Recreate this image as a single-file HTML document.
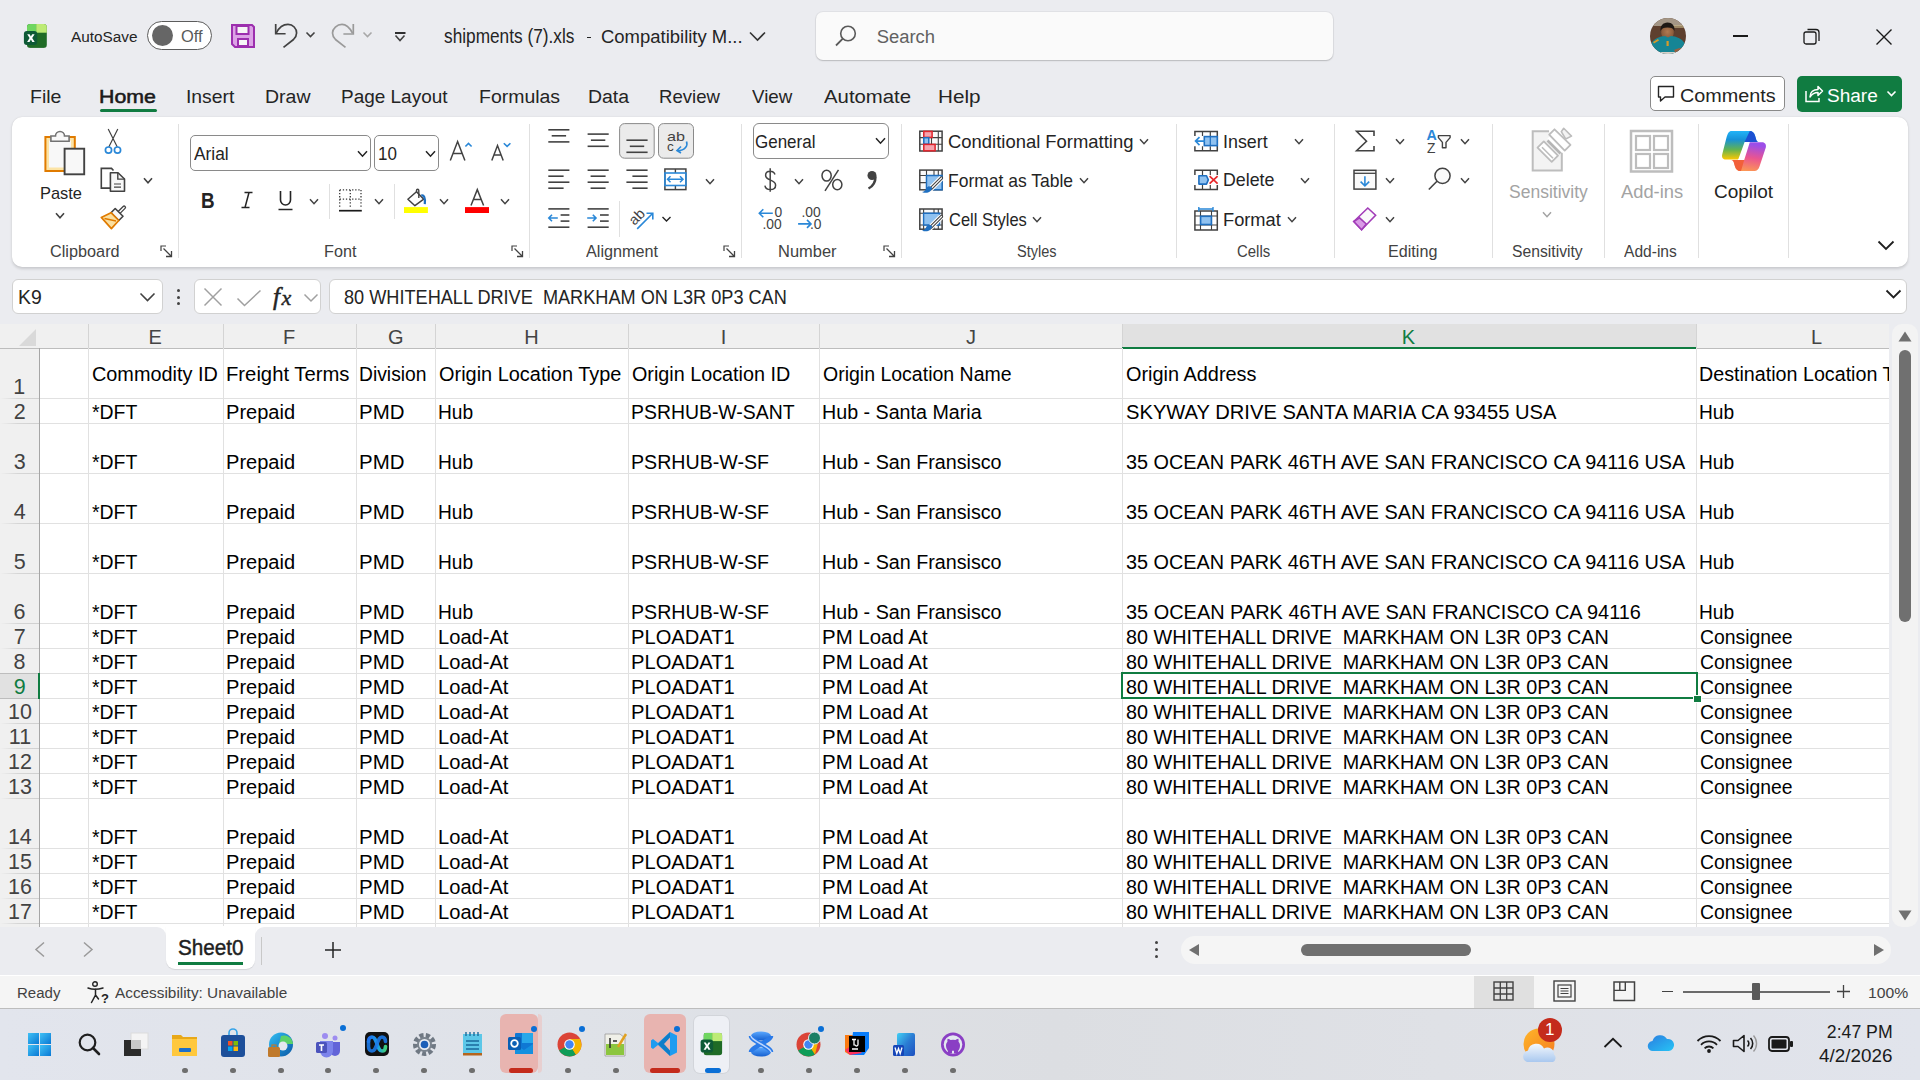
<!DOCTYPE html><html><head><meta charset="utf-8"><style>
html,body{margin:0;padding:0;}
body{width:1920px;height:1080px;position:relative;overflow:hidden;font-family:"Liberation Sans",sans-serif;background:#e9ecf2}
body>*{position:absolute;}
.t{position:absolute;white-space:pre;transform-origin:0 0;}
svg{position:absolute;overflow:visible}
</style></head><body>
<div style="left:0px;top:0px;width:1920px;height:1080px;background:#ebecf0"></div>
<svg style="left:0;top:0" width="1920" height="1080" viewBox="0 0 1920 1080"><defs><clipPath id="xlc"><rect x="27" y="23.9" width="19.8" height="24" rx="3.2"/></clipPath></defs>
<g clip-path="url(#xlc)"><rect x="27" y="23.9" width="20" height="24" fill="#1f6b26"/><rect x="27" y="23.9" width="9.2" height="8.8" fill="#6fd660"/><rect x="36.2" y="23.9" width="10.8" height="8.8" fill="#bdeb75"/></g>
<rect x="23.9" y="31" width="13.3" height="14" rx="3" fill="#0e5a36"/>
<path d="M27.2 34.2h2.4l1.3 2.4 1.3-2.4h2.4l-2.4 3.9 2.5 3.9h-2.4l-1.4-2.5-1.4 2.5h-2.4l2.5-3.9z" fill="#fff"/></svg>
<span class="t" style="left:71.30px;top:29.00px;font-size:15.51px;line-height:15.51px;color:#242424;transform:scaleX(0.9891);">AutoSave</span>
<div style="left:147px;top:21px;width:65px;height:29px;border:1.5px solid #5c5c5c;border-radius:15px;box-sizing:border-box;background:#fff"></div>
<div style="left:152px;top:25px;width:21px;height:21px;background:#666;border-radius:50%"></div>
<span class="t" style="left:180.96px;top:29.00px;font-size:15.80px;line-height:15.80px;color:#5a5a5a;transform:scaleX(1.0426);">Off</span>
<svg style="left:231px;top:24px;" width="24" height="24" viewBox="0 0 24 24"><path d="M1 1h20l2 2v20H4l-3-3z" fill="#dca3e6" stroke="#9c2fae" stroke-width="2"/>
<rect x="5.5" y="2" width="12" height="8" fill="#f6f6f6" stroke="#9c2fae" stroke-width="2"/>
<rect x="7" y="15" width="10" height="7" fill="#f6f6f6" stroke="#9c2fae" stroke-width="2"/></svg>
<svg style="left:0;top:0" width="1920" height="1080" viewBox="0 0 1920 1080"><path d="M275.7 24V33.75H285.6" fill="none" stroke="#424242" stroke-width="1.7"/><path d="M276.3 33C279 27.5 283 24.4 288 24.4C293 24.4 296.6 28.5 296.6 33C296.6 36 295 38 293.5 39.5L283.5 47.3" fill="none" stroke="#424242" stroke-width="1.7"/><path d="M353.3 24V34H343.4" fill="none" stroke="#9a9a9a" stroke-width="1.7"/><path d="M352.5 33C349.5 27.5 346 24.4 342 24.4C337 24.4 332.5 28.5 332.5 33C332.5 36 334 38 335.5 39.5L345.5 47.3" fill="none" stroke="#9a9a9a" stroke-width="1.7"/></svg>
<svg style="left:305px;top:31px;" width="12" height="8" viewBox="0 0 12 8"><path d="M1.5 1.5l4 4 4-4" fill="none" stroke="#424242" stroke-width="1.6"/></svg>
<svg style="left:362px;top:31px;" width="12" height="8" viewBox="0 0 12 8"><path d="M1.5 1.5l4 4 4-4" fill="none" stroke="#a8a8a8" stroke-width="1.6"/></svg>
<svg style="left:393px;top:30px;" width="14" height="13" viewBox="0 0 14 13"><path d="M2 3h10.5" stroke="#1a1a1a" stroke-width="1.8"/><path d="M2.5 5.5l4.5 5 4.5-5" fill="none" stroke="#424242" stroke-width="1.6"/></svg>
<span class="t" style="left:444.08px;top:27.00px;font-size:19.42px;line-height:19.42px;color:#242424;transform:scaleX(0.8890);">shipments (7).xls</span>
<div style="left:586.5px;top:37px;width:4.5px;height:1.4px;background:#242424"></div>
<span class="t" style="left:601.38px;top:28.00px;font-size:18.12px;line-height:18.12px;color:#242424;transform:scaleX(1.0196);">Compatibility M...</span>
<svg style="left:749px;top:31px;" width="17" height="11" viewBox="0 0 17 11"><path d="M1 1.5l7.5 7.5 7.5-7.5" fill="none" stroke="#333" stroke-width="1.6"/></svg>
<div style="left:816px;top:12px;width:517px;height:48px;background:#fafafa;border-radius:7px;box-shadow:0 1px 1.5px rgba(0,0,0,0.18), 0 0 0 1px rgba(0,0,0,0.04)"></div>
<svg style="left:834px;top:24px;" width="24" height="24" viewBox="0 0 24 24"><circle cx="14" cy="9.5" r="7.3" fill="none" stroke="#5a5a5a" stroke-width="1.6"/><path d="M8.8 14.7L2 21.5" stroke="#5a5a5a" stroke-width="1.8"/></svg>
<span class="t" style="left:876.67px;top:28.00px;font-size:18.41px;line-height:18.41px;color:#616161;">Search</span>
<svg style="left:1650px;top:17.7px;" width="36" height="36" viewBox="0 0 36 36"><defs><clipPath id="avc"><circle cx="18" cy="18" r="18"/></clipPath><radialGradient id="avf" cx="0.5" cy="0.45" r="0.5"><stop offset="0" stop-color="#b07a52"/><stop offset="1" stop-color="#8a5a3a"/></radialGradient></defs>
<g clip-path="url(#avc)"><rect x="0" y="0" width="36" height="36" fill="#5e3f2e"/><rect x="0" y="0" width="36" height="8" fill="#a49686"/>
<path d="M22 7h14v3H22z" fill="#c8b88a" opacity="0.6"/>
<ellipse cx="17.5" cy="14.5" rx="6.3" ry="7.5" fill="url(#avf)"/>
<path d="M10.5 13c-0.5-5 2.5-8.5 7-8.5s7.5 3 7 8.5c-1-2.5-3-3.5-7-3.5s-6 1-7 3.5z" fill="#1e1814"/>
<path d="M1 26c3-6 9-7.5 14-8l3 1.5 3-1.5c5 0.5 11 2 14 8v12H1z" fill="#168595"/>
<path d="M3 24l5-3 1 1.5-5 3z" fill="#d69a2a"/><rect x="16.5" y="23" width="2.2" height="5" fill="#d69a2a"/>
<path d="M24 32c4-1.5 8-2.5 12-2v6H26z" fill="#9a6040"/><rect x="10" y="34" width="16" height="3" fill="#d8d0c8"/></g></svg>
<div style="left:1733px;top:35px;width:15px;height:1.5px;background:#1a1a1a"></div>
<svg style="left:1803px;top:28px;" width="18" height="17" viewBox="0 0 18 17"><rect x="1" y="4" width="12" height="12" rx="2" fill="none" stroke="#1a1a1a" stroke-width="1.3"/><path d="M4.5 1.5h8.5a3 3 0 0 1 3 3v8.5" fill="none" stroke="#1a1a1a" stroke-width="1.3"/></svg>
<svg style="left:1875px;top:28px;" width="18" height="18" viewBox="0 0 18 18"><path d="M1.5 1.5l15 15M16.5 1.5l-15 15" stroke="#1a1a1a" stroke-width="1.4"/></svg>
<span class="t" style="left:30.19px;top:87.00px;font-size:19.13px;line-height:19.13px;color:#242424;transform:scaleX(1.0208);">File</span>
<span class="t" style="left:99.04px;top:87.00px;font-size:19.13px;line-height:19.13px;color:#1a1a1a;-webkit-text-stroke:0.55px #1a1a1a;transform:scaleX(1.1165);">Home</span>
<span class="t" style="left:185.76px;top:87.00px;font-size:19.13px;line-height:19.13px;color:#242424;transform:scaleX(1.0107);">Insert</span>
<span class="t" style="left:265.19px;top:87.00px;font-size:19.13px;line-height:19.13px;color:#242424;transform:scaleX(1.0200);">Draw</span>
<span class="t" style="left:340.98px;top:87.00px;font-size:19.13px;line-height:19.13px;color:#242424;transform:scaleX(0.9925);">Page Layout</span>
<span class="t" style="left:479.44px;top:87.00px;font-size:19.13px;line-height:19.13px;color:#242424;transform:scaleX(1.0184);">Formulas</span>
<span class="t" style="left:588.44px;top:87.00px;font-size:19.13px;line-height:19.13px;color:#242424;transform:scaleX(1.0171);">Data</span>
<span class="t" style="left:659.01px;top:87.00px;font-size:19.13px;line-height:19.13px;color:#242424;transform:scaleX(0.9719);">Review</span>
<span class="t" style="left:751.66px;top:87.00px;font-size:19.13px;line-height:19.13px;color:#242424;transform:scaleX(0.9809);">View</span>
<span class="t" style="left:823.75px;top:87.00px;font-size:19.13px;line-height:19.13px;color:#242424;transform:scaleX(1.0646);">Automate</span>
<span class="t" style="left:938.35px;top:87.00px;font-size:19.13px;line-height:19.13px;color:#242424;transform:scaleX(1.0806);">Help</span>
<div style="left:100px;top:108.5px;width:57px;height:3px;background:#107c41;border-radius:2px"></div>
<div style="left:1650px;top:76px;width:135px;height:35px;border:1px solid #8a8a8a;border-radius:5px;box-sizing:border-box;background:#fff"></div>
<svg style="left:1657px;top:85px;" width="18" height="18" viewBox="0 0 18 18"><path d="M1.5 1.5h15v10.5H8l-4.5 4V12H1.5z" fill="none" stroke="#242424" stroke-width="1.4" stroke-linejoin="round"/></svg>
<span class="t" style="left:1680.01px;top:87.00px;font-size:18.41px;line-height:18.41px;color:#242424;transform:scaleX(1.0752);">Comments</span>
<div style="left:1797px;top:76px;width:105px;height:36px;background:#107c41;border-radius:5px"></div>
<svg style="left:1803px;top:85px;" width="20" height="18" viewBox="0 0 20 18"><path d="M3 6v10.5h13V13" fill="none" stroke="#fff" stroke-width="1.5"/><path d="M7 12c0-5 3.5-7.5 8-7.5V1.5l4.5 4.5-4.5 4.5V7.5c-4 0-6 1.5-8 4.5z" fill="none" stroke="#fff" stroke-width="1.5" stroke-linejoin="round"/></svg>
<span class="t" style="left:1827.14px;top:87.00px;font-size:18.41px;line-height:18.41px;color:#ffffff;transform:scaleX(1.0339);">Share</span>
<svg style="left:1886px;top:90px;" width="12" height="8" viewBox="0 0 12 8"><path d="M1.5 1.5l4 4 4-4" fill="none" stroke="#fff" stroke-width="1.6"/></svg>
<div style="left:12px;top:117px;width:1896px;height:150px;background:#fff;border-radius:10px;box-shadow:0 1.5px 3px rgba(0,0,0,0.14),0 0 1px rgba(0,0,0,0.10)"></div>
<div style="left:178px;top:124px;width:1px;height:134px;background:#e0e0e0"></div>
<div style="left:529px;top:124px;width:1px;height:134px;background:#e0e0e0"></div>
<div style="left:741px;top:124px;width:1px;height:134px;background:#e0e0e0"></div>
<div style="left:901px;top:124px;width:1px;height:134px;background:#e0e0e0"></div>
<div style="left:1176px;top:124px;width:1px;height:134px;background:#e0e0e0"></div>
<div style="left:1334px;top:124px;width:1px;height:134px;background:#e0e0e0"></div>
<div style="left:1492px;top:124px;width:1px;height:134px;background:#e0e0e0"></div>
<div style="left:1604px;top:124px;width:1px;height:134px;background:#e0e0e0"></div>
<div style="left:1698px;top:124px;width:1px;height:134px;background:#e0e0e0"></div>
<div style="left:1788px;top:124px;width:1px;height:134px;background:#e0e0e0"></div>
<span class="t" style="left:50.19px;top:244.00px;font-size:16.67px;line-height:16.67px;color:#424242;transform:scaleX(0.9760);">Clipboard</span>
<span class="t" style="left:323.70px;top:244.00px;font-size:16.67px;line-height:16.67px;color:#424242;transform:scaleX(0.9713);">Font</span>
<span class="t" style="left:586.00px;top:244.00px;font-size:16.67px;line-height:16.67px;color:#424242;transform:scaleX(0.9730);">Alignment</span>
<span class="t" style="left:777.68px;top:244.00px;font-size:16.67px;line-height:16.67px;color:#424242;transform:scaleX(0.9884);">Number</span>
<span class="t" style="left:1016.84px;top:244.00px;font-size:16.67px;line-height:16.67px;color:#424242;transform:scaleX(0.8733);">Styles</span>
<span class="t" style="left:1237.25px;top:244.00px;font-size:16.67px;line-height:16.67px;color:#424242;transform:scaleX(0.8972);">Cells</span>
<span class="t" style="left:1387.71px;top:244.00px;font-size:16.67px;line-height:16.67px;color:#424242;transform:scaleX(0.9691);">Editing</span>
<span class="t" style="left:1511.79px;top:244.00px;font-size:16.67px;line-height:16.67px;color:#424242;transform:scaleX(0.9428);">Sensitivity</span>
<span class="t" style="left:1623.75px;top:244.00px;font-size:16.67px;line-height:16.67px;color:#424242;transform:scaleX(0.9344);">Add-ins</span>
<svg style="left:160px;top:245px;" width="13" height="13" viewBox="0 0 13 13"><path d="M1 6V1h5" fill="none" stroke="#424242" stroke-width="1.2"/><path d="M3.5 3.5L11.5 11.5M11.5 6v5.5H6" fill="none" stroke="#424242" stroke-width="1.3"/></svg>
<svg style="left:511px;top:245px;" width="13" height="13" viewBox="0 0 13 13"><path d="M1 6V1h5" fill="none" stroke="#424242" stroke-width="1.2"/><path d="M3.5 3.5L11.5 11.5M11.5 6v5.5H6" fill="none" stroke="#424242" stroke-width="1.3"/></svg>
<svg style="left:723px;top:245px;" width="13" height="13" viewBox="0 0 13 13"><path d="M1 6V1h5" fill="none" stroke="#424242" stroke-width="1.2"/><path d="M3.5 3.5L11.5 11.5M11.5 6v5.5H6" fill="none" stroke="#424242" stroke-width="1.3"/></svg>
<svg style="left:883px;top:245px;" width="13" height="13" viewBox="0 0 13 13"><path d="M1 6V1h5" fill="none" stroke="#424242" stroke-width="1.2"/><path d="M3.5 3.5L11.5 11.5M11.5 6v5.5H6" fill="none" stroke="#424242" stroke-width="1.3"/></svg>
<svg style="left:1877px;top:240px;" width="18" height="11" viewBox="0 0 18 11"><path d="M1.5 1.5l7.5 7.5 7.5-7.5" fill="none" stroke="#1f1f1f" stroke-width="1.8"/></svg>
<svg style="left:0;top:0" width="1920" height="1080" viewBox="0 0 1920 1080"><rect x="45.4" y="137" width="29.4" height="34" fill="#fce4a6" stroke="#e07b00" stroke-width="2"/><rect x="49" y="140.5" width="22" height="27" fill="#f8f8f8"/><path d="M50.9 141.3V136h4.6a4.5 4.5 0 0 1 9 0h4.6v5.3z" fill="#f8f8f8" stroke="#727272" stroke-width="1.6"/><rect x="64.6" y="148.7" width="19.6" height="25.6" fill="#f8f8f8" stroke="#424242" stroke-width="1.9"/><path d="M108.2 129L117.3 147M117.8 129L108.8 147" stroke="#424242" stroke-width="1.2"/><circle cx="108.5" cy="150.1" r="3.1" fill="none" stroke="#2a88d8" stroke-width="1.7"/><circle cx="117.5" cy="150.1" r="3.1" fill="none" stroke="#2a88d8" stroke-width="1.7"/><path d="M110 188.1H101.3V168.4H111.5L113.5 170.5" fill="none" stroke="#424242" stroke-width="1.6"/><path d="M110.4 172.7H118L124.5 179V191.3H110.4z" fill="#f8f8f8" stroke="#424242" stroke-width="1.6" stroke-linejoin="round"/><path d="M117.8 172.7V179.1H124.5" fill="none" stroke="#424242" stroke-width="1.4"/><path d="M114 184H121M114 187.2H121" stroke="#424242" stroke-width="1.2"/><path d="M119.1 212.4L124.1 207.4" stroke="#424242" stroke-width="4" stroke-linecap="round"/><path d="M119.1 212.4L124.1 207.4" stroke="#fff" stroke-width="1.4" stroke-linecap="round"/><path d="M111.0 212.7L115.2 208.5 123.0 216.3 118.8 220.5z" fill="#f8f8f8" stroke="#424242" stroke-width="1.6" stroke-linejoin="round"/><path d="M111.0 212.7L118.8 220.5 111.4 228.6 101.3 217.4z" fill="#fbe0a0" stroke="#e07b00" stroke-width="1.7" stroke-linejoin="round"/><path d="M104.5 218.5L116 221" stroke="#e07b00" stroke-width="1.3"/></svg>
<span class="t" style="left:39.89px;top:185.00px;font-size:17.39px;line-height:17.39px;color:#242424;transform:scaleX(0.9441);">Paste</span>
<svg style="left:55px;top:212px;" width="10" height="7.5" viewBox="0 0 10 7.5"><path d="M1 1.2l4.0 4.5l4.0 -4.5" fill="none" stroke="#424242" stroke-width="1.6"/></svg>
<svg style="left:143px;top:177px;" width="10" height="7.5" viewBox="0 0 10 7.5"><path d="M1 1.2l4.0 4.5l4.0 -4.5" fill="none" stroke="#424242" stroke-width="1.6"/></svg>
<div style="left:190px;top:135px;width:181px;height:36px;border:1px solid #8a8a8a;border-radius:5px;box-sizing:border-box;background:#fff"></div>
<span class="t" style="left:194.00px;top:145.00px;font-size:18.12px;line-height:18.12px;color:#242424;transform:scaleX(0.9557);">Arial</span>
<svg style="left:357px;top:150px;" width="11" height="8" viewBox="0 0 11 8"><path d="M1 1.2l4.5 5l4.5 -5" fill="none" stroke="#242424" stroke-width="1.5"/></svg>
<div style="left:374px;top:135px;width:65px;height:36px;border:1px solid #8a8a8a;border-radius:5px;box-sizing:border-box;background:#fff"></div>
<span class="t" style="left:377.73px;top:145.00px;font-size:18.70px;line-height:18.70px;color:#242424;transform:scaleX(0.9093);">10</span>
<svg style="left:425px;top:150px;" width="11" height="8" viewBox="0 0 11 8"><path d="M1 1.2l4.5 5l4.5 -5" fill="none" stroke="#242424" stroke-width="1.5"/></svg>
<svg style="left:0;top:0" width="1920" height="1080" viewBox="0 0 1920 1080"><path d="M450.3 160.4L457.6 141.6 464.9 160.4M453 153.6h9.2" fill="none" stroke="#424242" stroke-width="1.5"/><path d="M465.4 146.5l3.1-3.1 3.1 3.1" fill="none" stroke="#2a88d8" stroke-width="1.6"/><path d="M491.8 160.4L497.5 145.6 503.2 160.4M493.9 155h7.2" fill="none" stroke="#424242" stroke-width="1.5"/><path d="M503.8 143.2l3.3 3.2 3.3-3.2" fill="none" stroke="#2a88d8" stroke-width="1.6"/><path d="M339.7 189.9H361M339.7 199.2H361M339.7 189.9V208.6M350.3 189.9V208.6M361 189.9V208.6" fill="none" stroke="#3a3a3a" stroke-width="1.3" stroke-dasharray="1.3 1.8"/><path d="M339 210.7h22.8" stroke="#1a1a1a" stroke-width="1.7"/><path d="M407.9 199.2L416.5 191.7 423.75 199.2 414.9 205.7z" fill="#fff" stroke="#424242" stroke-width="1.5" stroke-linejoin="round"/><path d="M416.5 191.9v-1.5c0-1.6 2.3-1.6 2.3 0v7.5" fill="none" stroke="#424242" stroke-width="1.4"/><path d="M421.3 195.6c2.5-0.8 4.2 1.6 3.5 8.5" fill="none" stroke="#1f6fc0" stroke-width="2.2"/><rect x="404" y="207.1" width="23.9" height="5.9" fill="#ffff00"/><path d="M471 205.5L477.3 189.6 483.6 205.5M473.6 199.5h7.4" fill="none" stroke="#424242" stroke-width="1.5"/><rect x="465" y="207.1" width="24" height="5.9" fill="#ff0000"/></svg>
<span class="t" style="left:201.27px;top:191.00px;font-size:21.30px;line-height:21.30px;color:#242424;font-weight:bold;transform:scaleX(0.8849);">B</span>
<svg style="left:239px;top:191px;" width="16" height="18" viewBox="0 0 16 18"><path d="M5.5 1.5h8M2.5 16.5h8M10 1.5L6 16.5" fill="none" stroke="#242424" stroke-width="1.5"/></svg>
<svg style="left:277px;top:190px;" width="17" height="21" viewBox="0 0 17 21"><path d="M3.5 1v9a5 5 0 0 0 10 0V1" fill="none" stroke="#242424" stroke-width="1.6"/><path d="M1.5 19.5h14" stroke="#242424" stroke-width="1.5"/></svg>
<svg style="left:309px;top:198px;" width="10" height="7.5" viewBox="0 0 10 7.5"><path d="M1 1.2l4.0 4.5l4.0 -4.5" fill="none" stroke="#424242" stroke-width="1.5"/></svg>
<div style="left:329px;top:184px;width:1px;height:35px;background:#e0e0e0"></div>
<svg style="left:374px;top:198px;" width="10" height="7.5" viewBox="0 0 10 7.5"><path d="M1 1.2l4.0 4.5l4.0 -4.5" fill="none" stroke="#424242" stroke-width="1.5"/></svg>
<div style="left:394px;top:184px;width:1px;height:35px;background:#e0e0e0"></div>
<svg style="left:439px;top:198px;" width="10" height="7.5" viewBox="0 0 10 7.5"><path d="M1 1.2l4.0 4.5l4.0 -4.5" fill="none" stroke="#424242" stroke-width="1.5"/></svg>
<svg style="left:500px;top:198px;" width="10" height="7.5" viewBox="0 0 10 7.5"><path d="M1 1.2l4.0 4.5l4.0 -4.5" fill="none" stroke="#424242" stroke-width="1.5"/></svg>
<svg style="left:0;top:0" width="1920" height="1080" viewBox="0 0 1920 1080"><path d="M548.3 129.8H569.4" stroke="#424242" stroke-width="1.6"/><path d="M551.7 135.8H566.1" stroke="#424242" stroke-width="1.6"/><path d="M548.3 141.9H569.4" stroke="#424242" stroke-width="1.6"/><path d="M587.6 134.1H608.7" stroke="#424242" stroke-width="1.6"/><path d="M590.9 140.2H605.3" stroke="#424242" stroke-width="1.6"/><path d="M587.6 146.3H608.7" stroke="#424242" stroke-width="1.6"/><rect x="619.6" y="123.6" width="34.6" height="34.6" rx="5" fill="#ebebeb" stroke="#8a8a8a" stroke-width="1"/><path d="M626.4 140.2H647.6" stroke="#424242" stroke-width="1.6"/><path d="M629.8 146.3H644.2" stroke="#424242" stroke-width="1.6"/><path d="M626.4 152.3H647.6" stroke="#424242" stroke-width="1.6"/><rect x="658.5" y="123.6" width="35" height="34.6" rx="5" fill="#ebebeb" stroke="#8a8a8a" stroke-width="1"/><text x="667" y="140.6" font-family="Liberation Sans" font-size="13.5" fill="#424242" textLength="18" lengthAdjust="spacingAndGlyphs">ab</text><text x="667" y="151.2" font-family="Liberation Sans" font-size="13.5" fill="#424242">c</text><path d="M686.5 141.5c1.5 4-1 9-9 9.5M681 146.5l-4 4 4 2.5" fill="none" stroke="#2a88d8" stroke-width="1.6"/><path d="M548.3 170.2H569.4" stroke="#424242" stroke-width="1.6"/><path d="M548.3 176.2H563.6" stroke="#424242" stroke-width="1.6"/><path d="M548.3 182.2H569.4" stroke="#424242" stroke-width="1.6"/><path d="M548.3 188.2H563.6" stroke="#424242" stroke-width="1.6"/><path d="M587.6 170.2H608.7" stroke="#424242" stroke-width="1.6"/><path d="M590.6 176.2H605.6" stroke="#424242" stroke-width="1.6"/><path d="M587.6 182.2H608.7" stroke="#424242" stroke-width="1.6"/><path d="M590.6 188.2H605.6" stroke="#424242" stroke-width="1.6"/><path d="M626.4 170.2H647.6" stroke="#424242" stroke-width="1.6"/><path d="M632.4 176.2H647.6" stroke="#424242" stroke-width="1.6"/><path d="M626.4 182.2H647.6" stroke="#424242" stroke-width="1.6"/><path d="M632.4 188.2H647.6" stroke="#424242" stroke-width="1.6"/><rect x="664.9" y="169" width="21" height="20.6" fill="none" stroke="#424242" stroke-width="1.5"/><path d="M675.4 169v4M675.4 185.5v4" stroke="#424242" stroke-width="1.4"/><rect x="664.9" y="173" width="21" height="12.5" fill="none" stroke="#2a88d8" stroke-width="1.6"/><path d="M667.5 179.3h15.5M670.5 176.3l-3 3 3 3M680 176.3l3 3-3 3" fill="none" stroke="#2a88d8" stroke-width="1.5"/><path d="M548.3 208.9H569.4" stroke="#424242" stroke-width="1.6"/><path d="M560.6 215H569.4" stroke="#424242" stroke-width="1.6"/><path d="M560.6 221.1H569.4" stroke="#424242" stroke-width="1.6"/><path d="M548.3 227.2H569.4" stroke="#424242" stroke-width="1.6"/><path d="M557.8 218h-9M552 214.8l-3.2 3.2 3.2 3.2" fill="none" stroke="#2a88d8" stroke-width="1.6"/><path d="M587.6 208.9H608.7" stroke="#424242" stroke-width="1.6"/><path d="M600 215H608.7" stroke="#424242" stroke-width="1.6"/><path d="M600 221.1H608.7" stroke="#424242" stroke-width="1.6"/><path d="M587.6 227.2H608.7" stroke="#424242" stroke-width="1.6"/><path d="M587.2 218h9M592.8 214.8l3.2 3.2-3.2 3.2" fill="none" stroke="#2a88d8" stroke-width="1.6"/><text x="0" y="0" font-family="Liberation Sans" font-size="14.5" fill="#424242" transform="translate(634.5,226) rotate(-45)">ab</text><path d="M637.2 228.9L652.8 213.3M646.5 213.3h6.3v6.3" fill="none" stroke="#2a88d8" stroke-width="1.6"/><path d="M662.5 217l4 4 4-4" fill="none" stroke="#242424" stroke-width="1.4"/></svg>
<div style="left:619px;top:201px;width:1px;height:36px;background:#e0e0e0"></div>
<svg style="left:705px;top:178px;" width="10" height="7.5" viewBox="0 0 10 7.5"><path d="M1 1.2l4.0 4.5l4.0 -4.5" fill="none" stroke="#424242" stroke-width="1.5"/></svg>
<div style="left:753px;top:123px;width:136px;height:36px;border:1px solid #8a8a8a;border-radius:6px;box-sizing:border-box;background:#fff"></div>
<span class="t" style="left:755.15px;top:132.00px;font-size:19.13px;line-height:19.13px;color:#242424;transform:scaleX(0.8889);">General</span>
<svg style="left:875px;top:137px;" width="11" height="8" viewBox="0 0 11 8"><path d="M1 1.2l4.5 5l4.5 -5" fill="none" stroke="#242424" stroke-width="1.5"/></svg>
<svg style="left:0;top:0" width="1920" height="1080" viewBox="0 0 1920 1080"><path d="M775 174.5C774.3 172.3 772.5 171.2 770.2 171.2C767.4 171.2 765.6 172.8 765.6 175.2C765.6 178.2 768.2 179.2 770.6 180.1C773.2 181.1 775.6 182.3 775.6 185.2C775.6 187.9 773.4 189.6 770.3 189.6C767.5 189.6 765.4 188.2 764.9 185.6M770.2 168.3V191.7" fill="none" stroke="#424242" stroke-width="1.5"/><ellipse cx="826.6" cy="175.6" rx="4.6" ry="5.4" fill="none" stroke="#424242" stroke-width="1.5"/><ellipse cx="837.3" cy="184.6" rx="4.6" ry="5.2" fill="none" stroke="#424242" stroke-width="1.5"/><path d="M838.5 169.8L825 190.8" stroke="#424242" stroke-width="1.5"/></svg>
<svg style="left:794px;top:178px;" width="10" height="7.5" viewBox="0 0 10 7.5"><path d="M1 1.2l4.0 4.5l4.0 -4.5" fill="none" stroke="#424242" stroke-width="1.5"/></svg>
<svg style="left:865px;top:170px;" width="14" height="21" viewBox="0 0 14 21"><circle cx="7" cy="5.5" r="4.5" fill="#424242"/><path d="M10.5 6.5c0 6-3 10-7 12" fill="none" stroke="#424242" stroke-width="2.5"/></svg>
<svg style="left:0;top:0" width="1920" height="1080" viewBox="0 0 1920 1080"><text x="774.5" y="217.2" font-family="Liberation Sans" font-size="13.8" fill="#424242">0</text><text x="762.5" y="229.4" font-family="Liberation Sans" font-size="13.8" fill="#424242">.00</text><path d="M772.8 213.3H759.5M763.3 209.3l-4 4 4 4" fill="none" stroke="#2a88d8" stroke-width="1.6"/><text x="801.5" y="217.2" font-family="Liberation Sans" font-size="13.8" fill="#424242">.00</text><text x="810" y="229.4" font-family="Liberation Sans" font-size="13.8" fill="#424242">.0</text><path d="M798.1 223.9H811M807 219.9l4 4-4 4" fill="none" stroke="#2a88d8" stroke-width="1.6"/></svg>
<svg style="left:0;top:0" width="1920" height="1080" viewBox="0 0 1920 1080"><rect x="919.8" y="131.2" width="22.300000000000068" height="19.80000000000001" fill="#fafafa" stroke="#424242" stroke-width="1.5"/><path d="M924 131.2V151M931.5 131.2V151M938.3 131.2V151M919.8 137.6H942.1M919.8 144.3H942.1" stroke="#424242" stroke-width="1.1"/><rect x="923.8" y="131.4" width="8.3" height="6" fill="#f5a3ad" stroke="#e0242c" stroke-width="1.5"/><rect x="923.8" y="137.7" width="5" height="6.4" fill="#90c2f0" stroke="#1f6fc0" stroke-width="1.5"/><rect x="923.8" y="144.4" width="11.3" height="6.4" fill="#f5a3ad" stroke="#e0242c" stroke-width="1.5"/><rect x="919.8" y="170.1" width="22.300000000000068" height="19.700000000000017" fill="#fafafa" stroke="#424242" stroke-width="1.5"/><path d="M926.5 170.1V189.8M934 170.1V189.8M938.3 170.1V189.8M919.8 175.5H942.1M919.8 182.6H942.1" stroke="#424242" stroke-width="1.1"/><path d="M926.5 175.5H942.1V189.8H926.5z" fill="#90c2f0" stroke="#1f6fc0" stroke-width="1.4"/><path d="M941.5 178L929.5 190" stroke="#fff" stroke-width="5.5"/><path d="M941.5 178L931 188.5" stroke="#424242" stroke-width="3.2" stroke-linecap="round"/><path d="M941.5 178L931 188.5" stroke="#fafafa" stroke-width="1.2" stroke-linecap="round"/><path d="M931.5 187c-1.5-1.5-4-1-5 1-1 2-1.5 3.5-4.5 4 3 1.5 7 1 9-1.5 1.2-1.3 1.5-2.5 0.5-3.5z" fill="#1f6fc0"/><rect x="919.8" y="209" width="22.300000000000068" height="20.19999999999999" fill="#fafafa" stroke="#424242" stroke-width="1.5"/><path d="M923.6 209V229.2M934 209V229.2M938.3 209V229.2M919.8 213.3H942.1M919.8 225H942.1" stroke="#424242" stroke-width="1.1"/><path d="M923.6 213.3H939.5V225H923.6z" fill="#90c2f0" stroke="#1f6fc0" stroke-width="1.4"/><path d="M941.5 216.5L929.5 228.5" stroke="#fff" stroke-width="5.5"/><path d="M941.5 216.5L931 227.0" stroke="#424242" stroke-width="3.2" stroke-linecap="round"/><path d="M941.5 216.5L931 227.0" stroke="#fafafa" stroke-width="1.2" stroke-linecap="round"/><path d="M931.5 225.5c-1.5-1.5-4-1-5 1-1 2-1.5 3.5-4.5 4 3 1.5 7 1 9-1.5 1.2-1.3 1.5-2.5 0.5-3.5z" fill="#1f6fc0"/></svg>
<span class="t" style="left:948.08px;top:134.00px;font-size:17.97px;line-height:17.97px;color:#242424;transform:scaleX(1.0267);">Conditional Formatting</span>
<svg style="left:1139px;top:138px;" width="10" height="7.5" viewBox="0 0 10 7.5"><path d="M1 1.2l4.0 4.5l4.0 -4.5" fill="none" stroke="#424242" stroke-width="1.5"/></svg>
<span class="t" style="left:948.10px;top:172.00px;font-size:18.55px;line-height:18.55px;color:#242424;transform:scaleX(0.9438);">Format as Table</span>
<svg style="left:1079px;top:177px;" width="10" height="7.5" viewBox="0 0 10 7.5"><path d="M1 1.2l4.0 4.5l4.0 -4.5" fill="none" stroke="#424242" stroke-width="1.5"/></svg>
<span class="t" style="left:948.68px;top:212.00px;font-size:17.97px;line-height:17.97px;color:#242424;transform:scaleX(0.9174);">Cell Styles</span>
<svg style="left:1032px;top:216px;" width="10" height="7.5" viewBox="0 0 10 7.5"><path d="M1 1.2l4.0 4.5l4.0 -4.5" fill="none" stroke="#424242" stroke-width="1.5"/></svg>
<svg style="left:0;top:0" width="1920" height="1080" viewBox="0 0 1920 1080"><path d="M1194.9 135.9V131.4H1217.3V150.8H1194.9V146.3" fill="none" stroke="#424242" stroke-width="1.5"/><path d="M1202.5 131.4V135.9M1210.3 131.4V135.9M1202.5 146.3V150.8M1210.3 146.3V150.8" stroke="#424242" stroke-width="1.2"/><rect x="1204.3" y="136.6" width="13" height="9" fill="#90c2f0" stroke="#1f6fc0" stroke-width="1.6"/><path d="M1210.3 136.6V145.6" stroke="#1f6fc0" stroke-width="1.2"/><path d="M1205 141.1H1195.5M1199.5 137.1l-4 4 4 4" fill="none" stroke="#2a88d8" stroke-width="1.6"/></svg>
<span class="t" style="left:1222.89px;top:132.00px;font-size:19.13px;line-height:19.13px;color:#242424;transform:scaleX(0.9346);">Insert</span>
<svg style="left:1294px;top:138px;" width="10" height="7.5" viewBox="0 0 10 7.5"><path d="M1 1.2l4.0 4.5l4.0 -4.5" fill="none" stroke="#424242" stroke-width="1.5"/></svg>
<svg style="left:0;top:0" width="1920" height="1080" viewBox="0 0 1920 1080"><path d="M1194.9 175V170.3H1217.3V175M1194.9 185V189.6H1217.3V185" fill="none" stroke="#424242" stroke-width="1.5"/><path d="M1202.5 170.3V175M1210.3 170.3V175M1202.5 185V189.6M1210.3 185V189.6" stroke="#424242" stroke-width="1.2"/><path d="M1198.9 175.8H1206.5L1208.3 179.9 1206.5 184.1H1198.9z" fill="#90c2f0" stroke="#1f6fc0" stroke-width="1.6" stroke-linejoin="round"/><path d="M1209.6 176.2L1217.6 183.7M1217.6 176.2L1209.6 183.7" stroke="#e8282b" stroke-width="1.7"/></svg>
<span class="t" style="left:1223.08px;top:170.00px;font-size:19.13px;line-height:19.13px;color:#242424;transform:scaleX(0.9311);">Delete</span>
<svg style="left:1300px;top:177px;" width="10" height="7.5" viewBox="0 0 10 7.5"><path d="M1 1.2l4.0 4.5l4.0 -4.5" fill="none" stroke="#424242" stroke-width="1.5"/></svg>
<svg style="left:0;top:0" width="1920" height="1080" viewBox="0 0 1920 1080"><path d="M1194.9 230V211H1217.3V230z" fill="#fff" stroke="#424242" stroke-width="1.5"/><path d="M1194.9 216H1217.3M1194.9 225H1217.3M1200.5 211V230M1211.5 211V230" stroke="#424242" stroke-width="1.1"/><rect x="1200.6" y="216.3" width="10.8" height="8.2" fill="#90c2f0" stroke="#1f6fc0" stroke-width="1.6"/><path d="M1198.8 209H1213M1198.8 207V211.5M1213 207V211.5" stroke="#2a88d8" stroke-width="1.4"/></svg>
<span class="t" style="left:1223.04px;top:210.00px;font-size:19.13px;line-height:19.13px;color:#242424;transform:scaleX(0.9547);">Format</span>
<svg style="left:1287px;top:216px;" width="10" height="7.5" viewBox="0 0 10 7.5"><path d="M1 1.2l4.0 4.5l4.0 -4.5" fill="none" stroke="#424242" stroke-width="1.5"/></svg>
<svg style="left:0;top:0" width="1920" height="1080" viewBox="0 0 1920 1080"><path d="M1374 136V131.2H1356.6L1366.5 141.2 1356.6 150.8H1374V146" fill="none" stroke="#424242" stroke-width="1.6" stroke-linejoin="miter"/><text x="1426.6" y="139.6" font-family="Liberation Sans" font-weight="bold" font-size="14.3" fill="#2a88d8">A</text><text x="1427" y="152.6" font-family="Liberation Sans" font-size="13.8" fill="#424242">Z</text><path d="M1438.4 135.6H1450.1V137.6L1446 142.4V147.8H1442.4V142.4L1438.4 137.6z" fill="#fafafa" stroke="#424242" stroke-width="1.4" stroke-linejoin="round"/><rect x="1354" y="170.3" width="21.9" height="18.8" fill="#fafafa" stroke="#424242" stroke-width="1.5"/><path d="M1354 173.3H1375.9" stroke="#424242" stroke-width="1.3"/><path d="M1364.9 176.2V186M1360.6 181.6l4.3 4.3 4.3-4.3" fill="none" stroke="#2a88d8" stroke-width="1.6"/><circle cx="1442.5" cy="175.8" r="7.6" fill="#fafafa" stroke="#424242" stroke-width="1.5"/><path d="M1437 181.3L1428.8 189.5" stroke="#424242" stroke-width="1.6"/><path d="M1353.8 221.5L1367.8 208 1375.6 215.2 1361.6 229.7z" fill="#fafafa" stroke="#a23cb8" stroke-width="1.6" stroke-linejoin="miter"/><path d="M1353.8 221.5L1359.5 217.8 1366.3 224 1361.6 229.7z" fill="#d99be6" stroke="#a23cb8" stroke-width="1.6"/></svg>
<svg style="left:1395px;top:138px;" width="10" height="7.5" viewBox="0 0 10 7.5"><path d="M1 1.2l4.0 4.5l4.0 -4.5" fill="none" stroke="#424242" stroke-width="1.5"/></svg>
<svg style="left:1460px;top:138px;" width="10" height="7.5" viewBox="0 0 10 7.5"><path d="M1 1.2l4.0 4.5l4.0 -4.5" fill="none" stroke="#424242" stroke-width="1.5"/></svg>
<svg style="left:1385px;top:177px;" width="10" height="7.5" viewBox="0 0 10 7.5"><path d="M1 1.2l4.0 4.5l4.0 -4.5" fill="none" stroke="#424242" stroke-width="1.5"/></svg>
<svg style="left:1460px;top:177px;" width="10" height="7.5" viewBox="0 0 10 7.5"><path d="M1 1.2l4.0 4.5l4.0 -4.5" fill="none" stroke="#424242" stroke-width="1.5"/></svg>
<svg style="left:1385px;top:216px;" width="10" height="7.5" viewBox="0 0 10 7.5"><path d="M1 1.2l4.0 4.5l4.0 -4.5" fill="none" stroke="#424242" stroke-width="1.5"/></svg>
<svg style="left:0;top:0" width="1920" height="1080" viewBox="0 0 1920 1080"><path d="M1549 131.2H1532.7V170.5H1561.8V152" fill="#f3f3f3" stroke="#bdbdbd" stroke-width="2"/>
<path d="M1537.5 147.7L1543.8 141.4 1558 155.6 1551.7 161.9z" fill="#fff" stroke="#bdbdbd" stroke-width="1.8" stroke-linejoin="round"/>
<path d="M1542 147.3L1553 158.3" stroke="#bdbdbd" stroke-width="1.6"/>
<path d="M1548.5 137.5L1563.2 152.2" stroke="#fff" stroke-width="3"/>
<path d="M1547.5 140.5L1560.5 153.5" stroke="#b5b5b5" stroke-width="2.6"/>
<path d="M1549.2 134.6L1554.5 129.3 1570.5 144.8 1564.7 150.6z" fill="#fff" stroke="#bdbdbd" stroke-width="1.8" stroke-linejoin="round"/>
<path d="M1561.3 131.7L1563.7 128.3 1571.5 136.1 1565.7 139z" fill="#f3f3f3" stroke="#bdbdbd" stroke-width="1.6" stroke-linejoin="round"/></svg>
<span class="t" style="left:1508.71px;top:183.00px;font-size:18.41px;line-height:18.41px;color:#a3a3a3;transform:scaleX(0.9512);">Sensitivity</span>
<svg style="left:1542px;top:211px;" width="10" height="7.5" viewBox="0 0 10 7.5"><path d="M1 1.2l4.0 4.5l4.0 -4.5" fill="none" stroke="#a3a3a3" stroke-width="1.5"/></svg>
<svg style="left:1630px;top:130px;" width="44" height="42" viewBox="0 0 44 42"><rect x="1" y="1" width="41" height="40.5" fill="none" stroke="#bdbdbd" stroke-width="2.5"/><rect x="6" y="6" width="14" height="14" fill="none" stroke="#bdbdbd" stroke-width="2.2"/><rect x="24" y="6" width="14" height="14" fill="none" stroke="#bdbdbd" stroke-width="2.2"/><rect x="6" y="24" width="14" height="14" fill="none" stroke="#bdbdbd" stroke-width="2.2"/><rect x="24" y="24" width="14" height="14" fill="none" stroke="#bdbdbd" stroke-width="2.2"/></svg>
<span class="t" style="left:1620.50px;top:183.00px;font-size:18.41px;line-height:18.41px;color:#a3a3a3;transform:scaleX(0.9959);">Add-ins</span>
<svg style="left:0;top:0" width="1920" height="1080" viewBox="0 0 1920 1080"><defs><linearGradient id="cpa" x1="0" y1="0" x2="0" y2="1"><stop offset="0" stop-color="#22b4f8"/><stop offset="0.3" stop-color="#1792d8"/><stop offset="0.65" stop-color="#62b350"/><stop offset="1" stop-color="#ffc800"/></linearGradient>
<linearGradient id="cpb" x1="0.2" y1="0" x2="0" y2="1"><stop offset="0" stop-color="#9c4ee8"/><stop offset="0.45" stop-color="#ea5590"/><stop offset="1" stop-color="#ffa24a"/></linearGradient></defs>
<path d="M1731.5 130.9H1749.8C1752.5 130.9 1754 132.5 1755 135.5L1756.3 140C1756.8 141.3 1757.5 141.9 1758.4 141.9H1744.6L1738.6 158.4C1738.2 159.2 1737.5 159.6 1736.5 159.6H1726C1723 159.6 1721.5 157.5 1722.2 154.5L1726.5 137.5C1727.5 133.5 1729 130.9 1731.5 130.9z" fill="url(#cpa)"/>
<path d="M1744.6 141.9L1749.8 130.9C1752.5 130.9 1754 132.5 1755 135.5L1756.3 140C1756.8 141.3 1757.5 141.9 1758.4 141.9z" fill="#1c50d2"/>
<path d="M1762.1 142.2C1765 142.2 1766.5 144.5 1765.8 147.5L1759.5 166.5C1758.5 169.5 1757 170.9 1754.5 170.9H1740.1C1737.5 170.9 1736 169.5 1735 166.5L1733.7 162C1733.2 160.6 1732.5 159.9 1731.4 159.9H1744.2L1749.8 142.2z" fill="url(#cpb)"/>
<path d="M1744.2 159.9H1731.4C1732.5 159.9 1733.2 160.6 1733.7 162L1735 166.5C1736 169.5 1737.5 170.9 1740.1 170.9H1741z" fill="#f2603a"/></svg>
<span class="t" style="left:1714.05px;top:183.00px;font-size:18.41px;line-height:18.41px;color:#242424;transform:scaleX(1.0315);">Copilot</span>
<div style="left:12px;top:279px;width:151px;height:35px;background:#fff;border:1px solid #d1d1d1;border-radius:6px;box-sizing:border-box"></div>
<span class="t" style="left:17.95px;top:287.00px;font-size:20.58px;line-height:20.58px;color:#242424;transform:scaleX(0.9430);">K9</span>
<svg style="left:139px;top:292px;" width="17" height="11" viewBox="0 0 17 11"><path d="M1.5 1.5l7 7 7-7" fill="none" stroke="#424242" stroke-width="1.6"/></svg>
<div style="left:177px;top:289px;width:3px;height:3px;background:#424242;border-radius:50%"></div>
<div style="left:177px;top:295.5px;width:3px;height:3px;background:#424242;border-radius:50%"></div>
<div style="left:177px;top:302px;width:3px;height:3px;background:#424242;border-radius:50%"></div>
<div style="left:194px;top:279px;width:127px;height:35px;background:#fff;border:1px solid #d1d1d1;border-radius:6px;box-sizing:border-box"></div>
<svg style="left:203px;top:287px;" width="20" height="20" viewBox="0 0 20 20"><path d="M1.5 1.5l17 17M18.5 1.5l-17 17" stroke="#a0a0a0" stroke-width="1.5"/></svg>
<svg style="left:236px;top:289px;" width="26" height="18" viewBox="0 0 26 18"><path d="M1.5 9.5l7 7L24.5 1.5" fill="none" stroke="#a0a0a0" stroke-width="1.5"/></svg>
<svg style="left:0;top:0" width="1920" height="1080" viewBox="0 0 1920 1080"><text x="273" y="304.5" font-family="Liberation Serif" font-style="italic" font-size="25" fill="#242424" stroke="#242424" stroke-width="0.5">f</text><text x="281.5" y="304.5" font-family="Liberation Serif" font-style="italic" font-size="22" fill="#242424" stroke="#242424" stroke-width="0.4">x</text></svg>
<svg style="left:303px;top:293px;" width="16" height="10" viewBox="0 0 16 10"><path d="M1.5 1.5l6.5 6.5 6.5-6.5" fill="none" stroke="#a0a0a0" stroke-width="1.5"/></svg>
<div style="left:329px;top:279px;width:1578px;height:35px;background:#fff;border:1px solid #d1d1d1;border-radius:6px;box-sizing:border-box"></div>
<span class="t" style="left:343.68px;top:287.00px;font-size:20.58px;line-height:20.58px;color:#242424;transform:scaleX(0.8814);">80 WHITEHALL DRIVE  MARKHAM ON L3R 0P3 CAN</span>
<svg style="left:1885px;top:289px;" width="17" height="11" viewBox="0 0 17 11"><path d="M1.5 1.5l7 7 7-7" fill="none" stroke="#1f1f1f" stroke-width="1.8"/></svg>
<div style="left:0px;top:324px;width:1889px;height:24px;background:#f0f0f0"></div>
<div style="left:0px;top:348px;width:39px;height:579px;background:#f0f0f0"></div>
<div style="left:39px;top:348px;width:1850px;height:579px;background:#fff"></div>
<div style="left:1122px;top:324px;width:574px;height:24px;background:#e1e1e1"></div>
<div style="left:88px;top:324px;width:1px;height:24px;background:#d4d4d4"></div>
<div style="left:223px;top:324px;width:1px;height:24px;background:#d4d4d4"></div>
<div style="left:356px;top:324px;width:1px;height:24px;background:#d4d4d4"></div>
<div style="left:435px;top:324px;width:1px;height:24px;background:#d4d4d4"></div>
<div style="left:628px;top:324px;width:1px;height:24px;background:#d4d4d4"></div>
<div style="left:819px;top:324px;width:1px;height:24px;background:#d4d4d4"></div>
<div style="left:1122px;top:324px;width:1px;height:24px;background:#d4d4d4"></div>
<div style="left:1696px;top:324px;width:1px;height:24px;background:#d4d4d4"></div>
<div style="left:0px;top:348px;width:1889px;height:1px;background:#bdbdbd"></div>
<div style="left:1122px;top:347px;width:574px;height:2px;background:#107c41"></div>
<div style="left:39px;top:348px;width:1px;height:579px;background:#a6a6a6"></div>
<svg style="left:18px;top:328px;" width="20" height="19" viewBox="0 0 20 19"><path d="M18 1v17H1z" fill="#d9d9d9"/></svg>
<span class="t" style="left:148.45px;top:327.00px;font-size:20.00px;line-height:20.00px;color:#444444;">E</span>
<span class="t" style="left:283.00px;top:327.00px;font-size:20.00px;line-height:20.00px;color:#444444;">F</span>
<span class="t" style="left:387.95px;top:327.00px;font-size:20.00px;line-height:20.00px;color:#444444;">G</span>
<span class="t" style="left:524.30px;top:327.00px;font-size:20.00px;line-height:20.00px;color:#444444;">H</span>
<span class="t" style="left:720.75px;top:327.00px;font-size:20.00px;line-height:20.00px;color:#444444;">I</span>
<span class="t" style="left:966.10px;top:327.00px;font-size:20.00px;line-height:20.00px;color:#444444;">J</span>
<span class="t" style="left:1401.65px;top:327.00px;font-size:20.00px;line-height:20.00px;color:#107c41;">K</span>
<span class="t" style="left:1810.95px;top:327.00px;font-size:20.00px;line-height:20.00px;color:#444444;">L</span>
<div style="left:0px;top:398px;width:39px;height:1px;background:linear-gradient(90deg,rgba(212,212,212,0) 0%,#d6d6d6 45%,#d0d0d0 100%)"></div>
<div style="left:40px;top:398px;width:1849px;height:1px;background:#e1e1e1"></div>
<div style="left:0px;top:423px;width:39px;height:1px;background:linear-gradient(90deg,rgba(212,212,212,0) 0%,#d6d6d6 45%,#d0d0d0 100%)"></div>
<div style="left:40px;top:423px;width:1849px;height:1px;background:#e1e1e1"></div>
<div style="left:0px;top:473px;width:39px;height:1px;background:linear-gradient(90deg,rgba(212,212,212,0) 0%,#d6d6d6 45%,#d0d0d0 100%)"></div>
<div style="left:40px;top:473px;width:1849px;height:1px;background:#e1e1e1"></div>
<div style="left:0px;top:523px;width:39px;height:1px;background:linear-gradient(90deg,rgba(212,212,212,0) 0%,#d6d6d6 45%,#d0d0d0 100%)"></div>
<div style="left:40px;top:523px;width:1849px;height:1px;background:#e1e1e1"></div>
<div style="left:0px;top:573px;width:39px;height:1px;background:linear-gradient(90deg,rgba(212,212,212,0) 0%,#d6d6d6 45%,#d0d0d0 100%)"></div>
<div style="left:40px;top:573px;width:1849px;height:1px;background:#e1e1e1"></div>
<div style="left:0px;top:623px;width:39px;height:1px;background:linear-gradient(90deg,rgba(212,212,212,0) 0%,#d6d6d6 45%,#d0d0d0 100%)"></div>
<div style="left:40px;top:623px;width:1849px;height:1px;background:#e1e1e1"></div>
<div style="left:0px;top:648px;width:39px;height:1px;background:linear-gradient(90deg,rgba(212,212,212,0) 0%,#d6d6d6 45%,#d0d0d0 100%)"></div>
<div style="left:40px;top:648px;width:1849px;height:1px;background:#e1e1e1"></div>
<div style="left:0px;top:673px;width:39px;height:1px;background:linear-gradient(90deg,rgba(212,212,212,0) 0%,#d6d6d6 45%,#d0d0d0 100%)"></div>
<div style="left:40px;top:673px;width:1849px;height:1px;background:#e1e1e1"></div>
<div style="left:0px;top:698px;width:39px;height:1px;background:linear-gradient(90deg,rgba(212,212,212,0) 0%,#d6d6d6 45%,#d0d0d0 100%)"></div>
<div style="left:40px;top:698px;width:1849px;height:1px;background:#e1e1e1"></div>
<div style="left:0px;top:723px;width:39px;height:1px;background:linear-gradient(90deg,rgba(212,212,212,0) 0%,#d6d6d6 45%,#d0d0d0 100%)"></div>
<div style="left:40px;top:723px;width:1849px;height:1px;background:#e1e1e1"></div>
<div style="left:0px;top:748px;width:39px;height:1px;background:linear-gradient(90deg,rgba(212,212,212,0) 0%,#d6d6d6 45%,#d0d0d0 100%)"></div>
<div style="left:40px;top:748px;width:1849px;height:1px;background:#e1e1e1"></div>
<div style="left:0px;top:773px;width:39px;height:1px;background:linear-gradient(90deg,rgba(212,212,212,0) 0%,#d6d6d6 45%,#d0d0d0 100%)"></div>
<div style="left:40px;top:773px;width:1849px;height:1px;background:#e1e1e1"></div>
<div style="left:0px;top:798px;width:39px;height:1px;background:linear-gradient(90deg,rgba(212,212,212,0) 0%,#d6d6d6 45%,#d0d0d0 100%)"></div>
<div style="left:40px;top:798px;width:1849px;height:1px;background:#e1e1e1"></div>
<div style="left:0px;top:848px;width:39px;height:1px;background:linear-gradient(90deg,rgba(212,212,212,0) 0%,#d6d6d6 45%,#d0d0d0 100%)"></div>
<div style="left:40px;top:848px;width:1849px;height:1px;background:#e1e1e1"></div>
<div style="left:0px;top:873px;width:39px;height:1px;background:linear-gradient(90deg,rgba(212,212,212,0) 0%,#d6d6d6 45%,#d0d0d0 100%)"></div>
<div style="left:40px;top:873px;width:1849px;height:1px;background:#e1e1e1"></div>
<div style="left:0px;top:898px;width:39px;height:1px;background:linear-gradient(90deg,rgba(212,212,212,0) 0%,#d6d6d6 45%,#d0d0d0 100%)"></div>
<div style="left:40px;top:898px;width:1849px;height:1px;background:#e1e1e1"></div>
<div style="left:0px;top:923px;width:39px;height:1px;background:linear-gradient(90deg,rgba(212,212,212,0) 0%,#d6d6d6 45%,#d0d0d0 100%)"></div>
<div style="left:40px;top:923px;width:1849px;height:1px;background:#e1e1e1"></div>
<div style="left:88px;top:348px;width:1px;height:579px;background:#e1e1e1"></div>
<div style="left:223px;top:348px;width:1px;height:579px;background:#e1e1e1"></div>
<div style="left:356px;top:348px;width:1px;height:579px;background:#e1e1e1"></div>
<div style="left:435px;top:348px;width:1px;height:579px;background:#e1e1e1"></div>
<div style="left:628px;top:348px;width:1px;height:579px;background:#e1e1e1"></div>
<div style="left:819px;top:348px;width:1px;height:579px;background:#e1e1e1"></div>
<div style="left:1122px;top:348px;width:1px;height:579px;background:#e1e1e1"></div>
<div style="left:1696px;top:348px;width:1px;height:579px;background:#e1e1e1"></div>
<div style="left:0px;top:673px;width:39px;height:25px;background:#e1e1e1"></div>
<div style="left:0px;top:673px;width:39px;height:1px;background:#bdbdbd"></div>
<div style="left:0px;top:698px;width:39px;height:1px;background:#bdbdbd"></div>
<div style="left:38px;top:673px;width:2px;height:26px;background:#107c41"></div>
<span class="t" style="left:13.31px;top:377.00px;font-size:21.50px;line-height:21.50px;color:#424242;">1</span>
<span class="t" style="left:13.63px;top:402.00px;font-size:21.50px;line-height:21.50px;color:#424242;">2</span>
<span class="t" style="left:13.63px;top:452.00px;font-size:21.50px;line-height:21.50px;color:#424242;">3</span>
<span class="t" style="left:13.74px;top:502.00px;font-size:21.50px;line-height:21.50px;color:#424242;">4</span>
<span class="t" style="left:13.63px;top:552.00px;font-size:21.50px;line-height:21.50px;color:#424242;">5</span>
<span class="t" style="left:13.53px;top:602.00px;font-size:21.50px;line-height:21.50px;color:#424242;">6</span>
<span class="t" style="left:13.63px;top:627.00px;font-size:21.50px;line-height:21.50px;color:#424242;">7</span>
<span class="t" style="left:13.58px;top:652.00px;font-size:21.50px;line-height:21.50px;color:#424242;">8</span>
<span class="t" style="left:13.63px;top:677.00px;font-size:21.50px;line-height:21.50px;color:#107c41;">9</span>
<span class="t" style="left:7.94px;top:702.00px;font-size:21.50px;line-height:21.50px;color:#424242;">10</span>
<span class="t" style="left:8.85px;top:727.00px;font-size:21.50px;line-height:21.50px;color:#424242;">11</span>
<span class="t" style="left:8.10px;top:752.00px;font-size:21.50px;line-height:21.50px;color:#424242;">12</span>
<span class="t" style="left:7.99px;top:777.00px;font-size:21.50px;line-height:21.50px;color:#424242;">13</span>
<span class="t" style="left:7.88px;top:827.00px;font-size:21.50px;line-height:21.50px;color:#424242;">14</span>
<span class="t" style="left:7.99px;top:852.00px;font-size:21.50px;line-height:21.50px;color:#424242;">15</span>
<span class="t" style="left:7.99px;top:877.00px;font-size:21.50px;line-height:21.50px;color:#424242;">16</span>
<span class="t" style="left:8.10px;top:902.00px;font-size:21.50px;line-height:21.50px;color:#424242;">17</span>
<span class="t" style="left:91.61px;top:364.07px;font-size:20px;line-height:20px;color:#000;transform:scaleX(0.9924);">Commodity ID</span>
<span class="t" style="left:225.98px;top:364.07px;font-size:20px;line-height:20px;color:#000;transform:scaleX(1.0125);">Freight Terms</span>
<span class="t" style="left:359.06px;top:364.07px;font-size:20px;line-height:20px;color:#000;transform:scaleX(0.9642);">Division</span>
<span class="t" style="left:438.70px;top:364.07px;font-size:20px;line-height:20px;color:#000;transform:scaleX(0.9961);">Origin Location Type</span>
<span class="t" style="left:631.71px;top:364.07px;font-size:20px;line-height:20px;color:#000;transform:scaleX(0.9880);">Origin Location ID</span>
<span class="t" style="left:822.72px;top:364.07px;font-size:20px;line-height:20px;color:#000;transform:scaleX(0.9749);">Origin Location Name</span>
<span class="t" style="left:1125.70px;top:364.07px;font-size:20px;line-height:20px;color:#000;transform:scaleX(0.9946);">Origin Address</span>
<span class="t" style="left:1699.03px;top:364.07px;font-size:20px;line-height:20px;color:#000;transform:scaleX(0.9843);">Destination Location Type</span>
<span class="t" style="left:92.31px;top:402.07px;font-size:20px;line-height:20px;color:#000;transform:scaleX(0.9717);">*DFT</span>
<span class="t" style="left:226.00px;top:402.07px;font-size:20px;line-height:20px;color:#000;transform:scaleX(1.0030);">Prepaid</span>
<span class="t" style="left:358.97px;top:402.07px;font-size:20px;line-height:20px;color:#000;transform:scaleX(1.0215);">PMD</span>
<span class="t" style="left:438.07px;top:402.07px;font-size:20px;line-height:20px;color:#000;transform:scaleX(0.9577);">Hub</span>
<span class="t" style="left:631.05px;top:402.07px;font-size:20px;line-height:20px;color:#000;transform:scaleX(0.9706);">PSRHUB-W-SANT</span>
<span class="t" style="left:822.03px;top:402.07px;font-size:20px;line-height:20px;color:#000;transform:scaleX(0.9832);">Hub - Santa Maria</span>
<span class="t" style="left:1125.69px;top:402.07px;font-size:20px;line-height:20px;color:#000;transform:scaleX(1.0077);">SKYWAY DRIVE SANTA MARIA CA 93455 USA</span>
<span class="t" style="left:1699.07px;top:402.07px;font-size:20px;line-height:20px;color:#000;transform:scaleX(0.9577);">Hub</span>
<span class="t" style="left:92.31px;top:452.07px;font-size:20px;line-height:20px;color:#000;transform:scaleX(0.9717);">*DFT</span>
<span class="t" style="left:226.00px;top:452.07px;font-size:20px;line-height:20px;color:#000;transform:scaleX(1.0030);">Prepaid</span>
<span class="t" style="left:358.97px;top:452.07px;font-size:20px;line-height:20px;color:#000;transform:scaleX(1.0215);">PMD</span>
<span class="t" style="left:438.07px;top:452.07px;font-size:20px;line-height:20px;color:#000;transform:scaleX(0.9577);">Hub</span>
<span class="t" style="left:631.03px;top:452.07px;font-size:20px;line-height:20px;color:#000;transform:scaleX(0.9805);">PSRHUB-W-SF</span>
<span class="t" style="left:822.02px;top:452.07px;font-size:20px;line-height:20px;color:#000;transform:scaleX(0.9850);">Hub - San Fransisco</span>
<span class="t" style="left:1125.81px;top:452.07px;font-size:20px;line-height:20px;color:#000;transform:scaleX(0.9924);">35 OCEAN PARK 46TH AVE SAN FRANCISCO CA 94116 USA</span>
<span class="t" style="left:1699.07px;top:452.07px;font-size:20px;line-height:20px;color:#000;transform:scaleX(0.9577);">Hub</span>
<span class="t" style="left:92.31px;top:502.07px;font-size:20px;line-height:20px;color:#000;transform:scaleX(0.9717);">*DFT</span>
<span class="t" style="left:226.00px;top:502.07px;font-size:20px;line-height:20px;color:#000;transform:scaleX(1.0030);">Prepaid</span>
<span class="t" style="left:358.97px;top:502.07px;font-size:20px;line-height:20px;color:#000;transform:scaleX(1.0215);">PMD</span>
<span class="t" style="left:438.07px;top:502.07px;font-size:20px;line-height:20px;color:#000;transform:scaleX(0.9577);">Hub</span>
<span class="t" style="left:631.03px;top:502.07px;font-size:20px;line-height:20px;color:#000;transform:scaleX(0.9805);">PSRHUB-W-SF</span>
<span class="t" style="left:822.02px;top:502.07px;font-size:20px;line-height:20px;color:#000;transform:scaleX(0.9850);">Hub - San Fransisco</span>
<span class="t" style="left:1125.81px;top:502.07px;font-size:20px;line-height:20px;color:#000;transform:scaleX(0.9924);">35 OCEAN PARK 46TH AVE SAN FRANCISCO CA 94116 USA</span>
<span class="t" style="left:1699.07px;top:502.07px;font-size:20px;line-height:20px;color:#000;transform:scaleX(0.9577);">Hub</span>
<span class="t" style="left:92.31px;top:552.07px;font-size:20px;line-height:20px;color:#000;transform:scaleX(0.9717);">*DFT</span>
<span class="t" style="left:226.00px;top:552.07px;font-size:20px;line-height:20px;color:#000;transform:scaleX(1.0030);">Prepaid</span>
<span class="t" style="left:358.97px;top:552.07px;font-size:20px;line-height:20px;color:#000;transform:scaleX(1.0215);">PMD</span>
<span class="t" style="left:438.07px;top:552.07px;font-size:20px;line-height:20px;color:#000;transform:scaleX(0.9577);">Hub</span>
<span class="t" style="left:631.03px;top:552.07px;font-size:20px;line-height:20px;color:#000;transform:scaleX(0.9805);">PSRHUB-W-SF</span>
<span class="t" style="left:822.02px;top:552.07px;font-size:20px;line-height:20px;color:#000;transform:scaleX(0.9850);">Hub - San Fransisco</span>
<span class="t" style="left:1125.81px;top:552.07px;font-size:20px;line-height:20px;color:#000;transform:scaleX(0.9924);">35 OCEAN PARK 46TH AVE SAN FRANCISCO CA 94116 USA</span>
<span class="t" style="left:1699.07px;top:552.07px;font-size:20px;line-height:20px;color:#000;transform:scaleX(0.9577);">Hub</span>
<span class="t" style="left:92.31px;top:602.07px;font-size:20px;line-height:20px;color:#000;transform:scaleX(0.9717);">*DFT</span>
<span class="t" style="left:226.00px;top:602.07px;font-size:20px;line-height:20px;color:#000;transform:scaleX(1.0030);">Prepaid</span>
<span class="t" style="left:358.97px;top:602.07px;font-size:20px;line-height:20px;color:#000;transform:scaleX(1.0215);">PMD</span>
<span class="t" style="left:438.07px;top:602.07px;font-size:20px;line-height:20px;color:#000;transform:scaleX(0.9577);">Hub</span>
<span class="t" style="left:631.03px;top:602.07px;font-size:20px;line-height:20px;color:#000;transform:scaleX(0.9805);">PSRHUB-W-SF</span>
<span class="t" style="left:822.02px;top:602.07px;font-size:20px;line-height:20px;color:#000;transform:scaleX(0.9850);">Hub - San Fransisco</span>
<span class="t" style="left:1125.80px;top:602.07px;font-size:20px;line-height:20px;color:#000;transform:scaleX(0.9963);">35 OCEAN PARK 46TH AVE SAN FRANCISCO CA 94116</span>
<span class="t" style="left:1699.07px;top:602.07px;font-size:20px;line-height:20px;color:#000;transform:scaleX(0.9577);">Hub</span>
<span class="t" style="left:92.31px;top:627.07px;font-size:20px;line-height:20px;color:#000;transform:scaleX(0.9717);">*DFT</span>
<span class="t" style="left:226.00px;top:627.07px;font-size:20px;line-height:20px;color:#000;transform:scaleX(1.0030);">Prepaid</span>
<span class="t" style="left:358.97px;top:627.07px;font-size:20px;line-height:20px;color:#000;transform:scaleX(1.0215);">PMD</span>
<span class="t" style="left:437.99px;top:627.07px;font-size:20px;line-height:20px;color:#000;transform:scaleX(1.0059);">Load-At</span>
<span class="t" style="left:630.99px;top:627.07px;font-size:20px;line-height:20px;color:#000;transform:scaleX(1.0075);">PLOADAT1</span>
<span class="t" style="left:821.97px;top:627.07px;font-size:20px;line-height:20px;color:#000;transform:scaleX(1.0217);">PM Load At</span>
<span class="t" style="left:1125.71px;top:627.07px;font-size:20px;line-height:20px;color:#000;transform:scaleX(0.9887);">80 WHITEHALL DRIVE  MARKHAM ON L3R 0P3 CAN</span>
<span class="t" style="left:1699.63px;top:627.07px;font-size:20px;line-height:20px;color:#000;transform:scaleX(0.9674);">Consignee</span>
<span class="t" style="left:92.31px;top:652.07px;font-size:20px;line-height:20px;color:#000;transform:scaleX(0.9717);">*DFT</span>
<span class="t" style="left:226.00px;top:652.07px;font-size:20px;line-height:20px;color:#000;transform:scaleX(1.0030);">Prepaid</span>
<span class="t" style="left:358.97px;top:652.07px;font-size:20px;line-height:20px;color:#000;transform:scaleX(1.0215);">PMD</span>
<span class="t" style="left:437.99px;top:652.07px;font-size:20px;line-height:20px;color:#000;transform:scaleX(1.0059);">Load-At</span>
<span class="t" style="left:630.99px;top:652.07px;font-size:20px;line-height:20px;color:#000;transform:scaleX(1.0075);">PLOADAT1</span>
<span class="t" style="left:821.97px;top:652.07px;font-size:20px;line-height:20px;color:#000;transform:scaleX(1.0217);">PM Load At</span>
<span class="t" style="left:1125.71px;top:652.07px;font-size:20px;line-height:20px;color:#000;transform:scaleX(0.9887);">80 WHITEHALL DRIVE  MARKHAM ON L3R 0P3 CAN</span>
<span class="t" style="left:1699.63px;top:652.07px;font-size:20px;line-height:20px;color:#000;transform:scaleX(0.9674);">Consignee</span>
<span class="t" style="left:92.31px;top:677.07px;font-size:20px;line-height:20px;color:#000;transform:scaleX(0.9717);">*DFT</span>
<span class="t" style="left:226.00px;top:677.07px;font-size:20px;line-height:20px;color:#000;transform:scaleX(1.0030);">Prepaid</span>
<span class="t" style="left:358.97px;top:677.07px;font-size:20px;line-height:20px;color:#000;transform:scaleX(1.0215);">PMD</span>
<span class="t" style="left:437.99px;top:677.07px;font-size:20px;line-height:20px;color:#000;transform:scaleX(1.0059);">Load-At</span>
<span class="t" style="left:630.99px;top:677.07px;font-size:20px;line-height:20px;color:#000;transform:scaleX(1.0075);">PLOADAT1</span>
<span class="t" style="left:821.97px;top:677.07px;font-size:20px;line-height:20px;color:#000;transform:scaleX(1.0217);">PM Load At</span>
<span class="t" style="left:1125.71px;top:677.07px;font-size:20px;line-height:20px;color:#000;transform:scaleX(0.9887);">80 WHITEHALL DRIVE  MARKHAM ON L3R 0P3 CAN</span>
<span class="t" style="left:1699.63px;top:677.07px;font-size:20px;line-height:20px;color:#000;transform:scaleX(0.9674);">Consignee</span>
<span class="t" style="left:92.31px;top:702.07px;font-size:20px;line-height:20px;color:#000;transform:scaleX(0.9717);">*DFT</span>
<span class="t" style="left:226.00px;top:702.07px;font-size:20px;line-height:20px;color:#000;transform:scaleX(1.0030);">Prepaid</span>
<span class="t" style="left:358.97px;top:702.07px;font-size:20px;line-height:20px;color:#000;transform:scaleX(1.0215);">PMD</span>
<span class="t" style="left:437.99px;top:702.07px;font-size:20px;line-height:20px;color:#000;transform:scaleX(1.0059);">Load-At</span>
<span class="t" style="left:630.99px;top:702.07px;font-size:20px;line-height:20px;color:#000;transform:scaleX(1.0075);">PLOADAT1</span>
<span class="t" style="left:821.97px;top:702.07px;font-size:20px;line-height:20px;color:#000;transform:scaleX(1.0217);">PM Load At</span>
<span class="t" style="left:1125.71px;top:702.07px;font-size:20px;line-height:20px;color:#000;transform:scaleX(0.9887);">80 WHITEHALL DRIVE  MARKHAM ON L3R 0P3 CAN</span>
<span class="t" style="left:1699.63px;top:702.07px;font-size:20px;line-height:20px;color:#000;transform:scaleX(0.9674);">Consignee</span>
<span class="t" style="left:92.31px;top:727.07px;font-size:20px;line-height:20px;color:#000;transform:scaleX(0.9717);">*DFT</span>
<span class="t" style="left:226.00px;top:727.07px;font-size:20px;line-height:20px;color:#000;transform:scaleX(1.0030);">Prepaid</span>
<span class="t" style="left:358.97px;top:727.07px;font-size:20px;line-height:20px;color:#000;transform:scaleX(1.0215);">PMD</span>
<span class="t" style="left:437.99px;top:727.07px;font-size:20px;line-height:20px;color:#000;transform:scaleX(1.0059);">Load-At</span>
<span class="t" style="left:630.99px;top:727.07px;font-size:20px;line-height:20px;color:#000;transform:scaleX(1.0075);">PLOADAT1</span>
<span class="t" style="left:821.97px;top:727.07px;font-size:20px;line-height:20px;color:#000;transform:scaleX(1.0217);">PM Load At</span>
<span class="t" style="left:1125.71px;top:727.07px;font-size:20px;line-height:20px;color:#000;transform:scaleX(0.9887);">80 WHITEHALL DRIVE  MARKHAM ON L3R 0P3 CAN</span>
<span class="t" style="left:1699.63px;top:727.07px;font-size:20px;line-height:20px;color:#000;transform:scaleX(0.9674);">Consignee</span>
<span class="t" style="left:92.31px;top:752.07px;font-size:20px;line-height:20px;color:#000;transform:scaleX(0.9717);">*DFT</span>
<span class="t" style="left:226.00px;top:752.07px;font-size:20px;line-height:20px;color:#000;transform:scaleX(1.0030);">Prepaid</span>
<span class="t" style="left:358.97px;top:752.07px;font-size:20px;line-height:20px;color:#000;transform:scaleX(1.0215);">PMD</span>
<span class="t" style="left:437.99px;top:752.07px;font-size:20px;line-height:20px;color:#000;transform:scaleX(1.0059);">Load-At</span>
<span class="t" style="left:630.99px;top:752.07px;font-size:20px;line-height:20px;color:#000;transform:scaleX(1.0075);">PLOADAT1</span>
<span class="t" style="left:821.97px;top:752.07px;font-size:20px;line-height:20px;color:#000;transform:scaleX(1.0217);">PM Load At</span>
<span class="t" style="left:1125.71px;top:752.07px;font-size:20px;line-height:20px;color:#000;transform:scaleX(0.9887);">80 WHITEHALL DRIVE  MARKHAM ON L3R 0P3 CAN</span>
<span class="t" style="left:1699.63px;top:752.07px;font-size:20px;line-height:20px;color:#000;transform:scaleX(0.9674);">Consignee</span>
<span class="t" style="left:92.31px;top:777.07px;font-size:20px;line-height:20px;color:#000;transform:scaleX(0.9717);">*DFT</span>
<span class="t" style="left:226.00px;top:777.07px;font-size:20px;line-height:20px;color:#000;transform:scaleX(1.0030);">Prepaid</span>
<span class="t" style="left:358.97px;top:777.07px;font-size:20px;line-height:20px;color:#000;transform:scaleX(1.0215);">PMD</span>
<span class="t" style="left:437.99px;top:777.07px;font-size:20px;line-height:20px;color:#000;transform:scaleX(1.0059);">Load-At</span>
<span class="t" style="left:630.99px;top:777.07px;font-size:20px;line-height:20px;color:#000;transform:scaleX(1.0075);">PLOADAT1</span>
<span class="t" style="left:821.97px;top:777.07px;font-size:20px;line-height:20px;color:#000;transform:scaleX(1.0217);">PM Load At</span>
<span class="t" style="left:1125.71px;top:777.07px;font-size:20px;line-height:20px;color:#000;transform:scaleX(0.9887);">80 WHITEHALL DRIVE  MARKHAM ON L3R 0P3 CAN</span>
<span class="t" style="left:1699.63px;top:777.07px;font-size:20px;line-height:20px;color:#000;transform:scaleX(0.9674);">Consignee</span>
<span class="t" style="left:92.31px;top:827.07px;font-size:20px;line-height:20px;color:#000;transform:scaleX(0.9717);">*DFT</span>
<span class="t" style="left:226.00px;top:827.07px;font-size:20px;line-height:20px;color:#000;transform:scaleX(1.0030);">Prepaid</span>
<span class="t" style="left:358.97px;top:827.07px;font-size:20px;line-height:20px;color:#000;transform:scaleX(1.0215);">PMD</span>
<span class="t" style="left:437.99px;top:827.07px;font-size:20px;line-height:20px;color:#000;transform:scaleX(1.0059);">Load-At</span>
<span class="t" style="left:630.99px;top:827.07px;font-size:20px;line-height:20px;color:#000;transform:scaleX(1.0075);">PLOADAT1</span>
<span class="t" style="left:821.97px;top:827.07px;font-size:20px;line-height:20px;color:#000;transform:scaleX(1.0217);">PM Load At</span>
<span class="t" style="left:1125.71px;top:827.07px;font-size:20px;line-height:20px;color:#000;transform:scaleX(0.9887);">80 WHITEHALL DRIVE  MARKHAM ON L3R 0P3 CAN</span>
<span class="t" style="left:1699.63px;top:827.07px;font-size:20px;line-height:20px;color:#000;transform:scaleX(0.9674);">Consignee</span>
<span class="t" style="left:92.31px;top:852.07px;font-size:20px;line-height:20px;color:#000;transform:scaleX(0.9717);">*DFT</span>
<span class="t" style="left:226.00px;top:852.07px;font-size:20px;line-height:20px;color:#000;transform:scaleX(1.0030);">Prepaid</span>
<span class="t" style="left:358.97px;top:852.07px;font-size:20px;line-height:20px;color:#000;transform:scaleX(1.0215);">PMD</span>
<span class="t" style="left:437.99px;top:852.07px;font-size:20px;line-height:20px;color:#000;transform:scaleX(1.0059);">Load-At</span>
<span class="t" style="left:630.99px;top:852.07px;font-size:20px;line-height:20px;color:#000;transform:scaleX(1.0075);">PLOADAT1</span>
<span class="t" style="left:821.97px;top:852.07px;font-size:20px;line-height:20px;color:#000;transform:scaleX(1.0217);">PM Load At</span>
<span class="t" style="left:1125.71px;top:852.07px;font-size:20px;line-height:20px;color:#000;transform:scaleX(0.9887);">80 WHITEHALL DRIVE  MARKHAM ON L3R 0P3 CAN</span>
<span class="t" style="left:1699.63px;top:852.07px;font-size:20px;line-height:20px;color:#000;transform:scaleX(0.9674);">Consignee</span>
<span class="t" style="left:92.31px;top:877.07px;font-size:20px;line-height:20px;color:#000;transform:scaleX(0.9717);">*DFT</span>
<span class="t" style="left:226.00px;top:877.07px;font-size:20px;line-height:20px;color:#000;transform:scaleX(1.0030);">Prepaid</span>
<span class="t" style="left:358.97px;top:877.07px;font-size:20px;line-height:20px;color:#000;transform:scaleX(1.0215);">PMD</span>
<span class="t" style="left:437.99px;top:877.07px;font-size:20px;line-height:20px;color:#000;transform:scaleX(1.0059);">Load-At</span>
<span class="t" style="left:630.99px;top:877.07px;font-size:20px;line-height:20px;color:#000;transform:scaleX(1.0075);">PLOADAT1</span>
<span class="t" style="left:821.97px;top:877.07px;font-size:20px;line-height:20px;color:#000;transform:scaleX(1.0217);">PM Load At</span>
<span class="t" style="left:1125.71px;top:877.07px;font-size:20px;line-height:20px;color:#000;transform:scaleX(0.9887);">80 WHITEHALL DRIVE  MARKHAM ON L3R 0P3 CAN</span>
<span class="t" style="left:1699.63px;top:877.07px;font-size:20px;line-height:20px;color:#000;transform:scaleX(0.9674);">Consignee</span>
<span class="t" style="left:92.31px;top:902.07px;font-size:20px;line-height:20px;color:#000;transform:scaleX(0.9717);">*DFT</span>
<span class="t" style="left:226.00px;top:902.07px;font-size:20px;line-height:20px;color:#000;transform:scaleX(1.0030);">Prepaid</span>
<span class="t" style="left:358.97px;top:902.07px;font-size:20px;line-height:20px;color:#000;transform:scaleX(1.0215);">PMD</span>
<span class="t" style="left:437.99px;top:902.07px;font-size:20px;line-height:20px;color:#000;transform:scaleX(1.0059);">Load-At</span>
<span class="t" style="left:630.99px;top:902.07px;font-size:20px;line-height:20px;color:#000;transform:scaleX(1.0075);">PLOADAT1</span>
<span class="t" style="left:821.97px;top:902.07px;font-size:20px;line-height:20px;color:#000;transform:scaleX(1.0217);">PM Load At</span>
<span class="t" style="left:1125.71px;top:902.07px;font-size:20px;line-height:20px;color:#000;transform:scaleX(0.9887);">80 WHITEHALL DRIVE  MARKHAM ON L3R 0P3 CAN</span>
<span class="t" style="left:1699.63px;top:902.07px;font-size:20px;line-height:20px;color:#000;transform:scaleX(0.9674);">Consignee</span>
<div style="left:1121px;top:672px;width:577px;height:27px;border:2px solid #107c41;box-sizing:border-box"></div>
<div style="left:1693px;top:695px;width:7px;height:6px;background:#107c41;border:1px solid #fff"></div>
<div style="left:1889px;top:324px;width:31px;height:603px;background:#ebecf0"></div>
<div style="left:1892px;top:324px;width:26px;height:603px;background:#f3f3f3;border-radius:10px"></div>
<svg style="left:1897px;top:330px;" width="16" height="13" viewBox="0 0 16 13"><path d="M8 1.5L14.5 11.5h-13z" fill="#707070"/></svg>
<div style="left:1899px;top:350px;width:12px;height:272px;background:#707070;border-radius:6px"></div>
<svg style="left:1897px;top:909px;" width="16" height="13" viewBox="0 0 16 13"><path d="M8 11.5L14.5 1.5h-13z" fill="#707070"/></svg>
<div style="left:150px;top:927px;width:120px;height:12px;background:#fff"></div>
<div style="left:0px;top:927px;width:166px;height:48px;background:#ebecf0;border-radius:0 9px 0 0"></div>
<div style="left:255px;top:927px;width:1665px;height:48px;background:#ebecf0;border-radius:9px 0 0 0"></div>
<svg style="left:33px;top:941px;" width="14" height="17" viewBox="0 0 14 17"><path d="M11 1.5L3 8.5l8 7" fill="none" stroke="#9a9a9a" stroke-width="1.5"/></svg>
<svg style="left:81px;top:941px;" width="14" height="17" viewBox="0 0 14 17"><path d="M3 1.5l8 7-8 7" fill="none" stroke="#9a9a9a" stroke-width="1.5"/></svg>
<div style="left:166px;top:926px;width:89px;height:43px;background:#fff;border-radius:0 0 9px 9px;box-shadow:0 1px 1px rgba(0,0,0,0.10)"></div>
<span class="t" style="left:177.87px;top:937.00px;font-size:22.32px;line-height:22.32px;color:#1f1f1f;-webkit-text-stroke:0.45px #1f1f1f;transform:scaleX(0.9273);">Sheet0</span>
<div style="left:178px;top:962px;width:65px;height:3px;background:#107c41"></div>
<div style="left:261px;top:937px;width:1px;height:28px;background:#c8c8c8"></div>
<svg style="left:324px;top:941px;" width="18" height="18" viewBox="0 0 18 18"><path d="M9 1v16M1 9h16" stroke="#242424" stroke-width="1.5"/></svg>
<div style="left:1155px;top:941px;width:3px;height:3px;background:#424242;border-radius:50%"></div>
<div style="left:1155px;top:948px;width:3px;height:3px;background:#424242;border-radius:50%"></div>
<div style="left:1155px;top:955px;width:3px;height:3px;background:#424242;border-radius:50%"></div>
<div style="left:1181px;top:936px;width:710px;height:28px;background:#f5f5f5;border-radius:14px"></div>
<svg style="left:1187px;top:943px;" width="14" height="14" viewBox="0 0 14 14"><path d="M12 1L2 7l10 6z" fill="#707070"/></svg>
<div style="left:1301px;top:944px;width:170px;height:12px;background:#707070;border-radius:6px"></div>
<svg style="left:1872px;top:943px;" width="14" height="14" viewBox="0 0 14 14"><path d="M2 1l10 6-10 6z" fill="#707070"/></svg>
<div style="left:0px;top:975px;width:1920px;height:34px;background:#f5f5f5;border-top:1px solid #fff;box-sizing:border-box"></div>
<div style="left:0px;top:1008px;width:1920px;height:1px;background:#bdbdbd"></div>
<span class="t" style="left:16.60px;top:985.00px;font-size:15.51px;line-height:15.51px;color:#424242;transform:scaleX(0.9684);">Ready</span>
<svg style="left:87px;top:981px;" width="24" height="23" viewBox="0 0 24 23"><circle cx="8" cy="3" r="2.3" fill="none" stroke="#242424" stroke-width="1.4"/><path d="M1 7c4 1.5 10 1.5 15 0M8.5 8v6l-4 7.5M8.5 14l3 4" fill="none" stroke="#242424" stroke-width="1.5" stroke-linecap="round"/><text x="14" y="22" font-family="Liberation Sans" font-weight="bold" font-size="13" fill="#242424">?</text></svg>
<span class="t" style="left:115.30px;top:985.00px;font-size:15.51px;line-height:15.51px;color:#424242;transform:scaleX(0.9898);">Accessibility: Unavailable</span>
<div style="left:1474px;top:976px;width:60px;height:32px;background:#e0e0e0"></div>
<svg style="left:1493px;top:981px;" width="21" height="20" viewBox="0 0 21 20"><rect x="1" y="1" width="19" height="18" fill="none" stroke="#424242" stroke-width="1.4"/><path d="M1 7h19M1 13h19M7.3 1v18M13.7 1v18" stroke="#424242" stroke-width="1.3"/></svg>
<svg style="left:1553px;top:980px;" width="23" height="22" viewBox="0 0 23 22"><rect x="1" y="1" width="21" height="20" fill="none" stroke="#424242" stroke-width="1.4"/><rect x="5" y="5" width="13" height="12" fill="none" stroke="#424242" stroke-width="1.2"/><path d="M7.5 8.5h8M7.5 11h8M7.5 13.5h8" stroke="#424242" stroke-width="1.1"/></svg>
<svg style="left:0;top:0" width="1920" height="1080" viewBox="0 0 1920 1080"><rect x="1614" y="982" width="20.5" height="18.5" fill="none" stroke="#424242" stroke-width="1.5"/><path d="M1614 990.4H1625.3V982M1619.8 982V990.4" fill="none" stroke="#424242" stroke-width="1.4"/></svg>
<div style="left:1662px;top:991px;width:11px;height:1.3px;background:#424242"></div>
<div style="left:1683px;top:990.5px;width:147px;height:2px;background:#6a6a6a"></div>
<div style="left:1752px;top:983px;width:8px;height:17px;background:#5a5a5a;border-radius:1px"></div>
<svg style="left:1837px;top:985px;" width="13" height="13" viewBox="0 0 13 13"><path d="M6.5 0v13M0 6.5h13" stroke="#424242" stroke-width="1.3"/></svg>
<span class="t" style="left:1867.82px;top:985.00px;font-size:15.51px;line-height:15.51px;color:#424242;transform:scaleX(1.0134);">100%</span>
<div style="left:0px;top:1009px;width:1920px;height:71px;background:linear-gradient(90deg,#e2e5ed 0%,#dfe2e8 30%,#dcdee2 55%,#dfe1e6 75%,#e1e4ec 100%)"></div>
<div style="left:500px;top:1014px;width:38px;height:59px;background:#e8b4b0;border-radius:6px"></div>
<div style="left:538px;top:1014px;width:4px;height:59px;background:#ecc3c0;border-radius:0 6px 6px 0;opacity:0.6"></div>
<div style="left:509px;top:1068px;width:24px;height:5px;background:#c42b1c;border-radius:3px"></div>
<div style="left:644px;top:1014px;width:42px;height:59px;background:#e8b4b0;border-radius:6px"></div>
<div style="left:650px;top:1068px;width:30px;height:5px;background:#c42b1c;border-radius:3px"></div>
<div style="left:694px;top:1016px;width:35px;height:57px;background:#eef0f5;border-radius:6px;box-shadow:0 0 0 1px rgba(0,0,0,0.05)"></div>
<div style="left:705px;top:1068px;width:16px;height:5px;background:#0a6fd6;border-radius:3px"></div>
<div style="left:182px;top:1068px;width:6px;height:5px;background:#6e6e6e;border-radius:3px"></div>
<div style="left:230px;top:1068px;width:6px;height:5px;background:#6e6e6e;border-radius:3px"></div>
<div style="left:278px;top:1068px;width:6px;height:5px;background:#6e6e6e;border-radius:3px"></div>
<div style="left:325px;top:1068px;width:6px;height:5px;background:#6e6e6e;border-radius:3px"></div>
<div style="left:373px;top:1068px;width:6px;height:5px;background:#6e6e6e;border-radius:3px"></div>
<div style="left:421px;top:1068px;width:6px;height:5px;background:#6e6e6e;border-radius:3px"></div>
<div style="left:469px;top:1068px;width:6px;height:5px;background:#6e6e6e;border-radius:3px"></div>
<div style="left:565px;top:1068px;width:6px;height:5px;background:#6e6e6e;border-radius:3px"></div>
<div style="left:613px;top:1068px;width:6px;height:5px;background:#6e6e6e;border-radius:3px"></div>
<div style="left:758px;top:1068px;width:6px;height:5px;background:#6e6e6e;border-radius:3px"></div>
<div style="left:806px;top:1068px;width:6px;height:5px;background:#6e6e6e;border-radius:3px"></div>
<div style="left:854px;top:1068px;width:6px;height:5px;background:#6e6e6e;border-radius:3px"></div>
<div style="left:902px;top:1068px;width:6px;height:5px;background:#6e6e6e;border-radius:3px"></div>
<div style="left:950px;top:1068px;width:6px;height:5px;background:#6e6e6e;border-radius:3px"></div>
<svg style="left:28px;top:1033px;" width="23" height="23" viewBox="0 0 23 23"><defs><linearGradient id="ws" x1="0" y1="0" x2="1" y2="1"><stop offset="0" stop-color="#3fc1f5"/><stop offset="1" stop-color="#0a78d4"/></linearGradient></defs><rect x="0" y="0" width="11" height="11" fill="url(#ws)"/><rect x="12" y="0" width="11" height="11" fill="url(#ws)"/><rect x="0" y="12" width="11" height="11" fill="url(#ws)"/><rect x="12" y="12" width="11" height="11" fill="url(#ws)"/></svg>
<svg style="left:78px;top:1033px;" width="22" height="23" viewBox="0 0 22 23"><circle cx="9.5" cy="9.5" r="7.8" fill="none" stroke="#1f1f1f" stroke-width="2.2"/><path d="M15 15l6 6" stroke="#1f1f1f" stroke-width="2.6" stroke-linecap="round"/></svg>
<svg style="left:124px;top:1033px;" width="25" height="23" viewBox="0 0 25 23"><rect x="7" y="0" width="17" height="16" fill="#f4f4f4" stroke="#dcdcdc"/><rect x="0" y="7" width="17" height="16" fill="#2b2b2b"/><rect x="7" y="7" width="10" height="9" fill="#c8c8c8"/></svg>
<svg style="left:172px;top:1033px;" width="25" height="23" viewBox="0 0 25 23"><path d="M0 2h9l2 2h14v19H0z" fill="#e8a818"/><rect x="0" y="6" width="25" height="17" fill="#ffc83d"/><rect x="7" y="15" width="12" height="4" rx="1" fill="#1e6fc8"/></svg>
<svg style="left:221px;top:1031px;" width="24" height="26" viewBox="0 0 24 26"><path d="M8 4V2a4 4 0 0 1 8 0v2" fill="none" stroke="#36a3e8" stroke-width="1.6"/><rect x="0" y="4" width="24" height="22" rx="3" fill="#1d4f9a"/><rect x="7" y="10" width="4.5" height="4.5" fill="#f35325"/><rect x="12.5" y="10" width="4.5" height="4.5" fill="#81bc06"/><rect x="7" y="15.5" width="4.5" height="4.5" fill="#05a6f0"/><rect x="12.5" y="15.5" width="4.5" height="4.5" fill="#ffba08"/></svg>
<svg style="left:268px;top:1032px;" width="26" height="25" viewBox="0 0 26 25"><defs><linearGradient id="ed" x1="0" y1="0" x2="1" y2="1"><stop offset="0" stop-color="#35c1f1"/><stop offset="0.5" stop-color="#1a8ad0"/><stop offset="1" stop-color="#0c59a4"/></linearGradient></defs><circle cx="13" cy="12.5" r="12" fill="url(#ed)"/><path d="M13 4a9 9 0 0 1 12 8H14a4 4 0 0 0-4 4" fill="#5bd26a"/><circle cx="15" cy="14" r="4.5" fill="#e3e8f0"/><rect x="0" y="15" width="12" height="10" rx="1.5" fill="#c07a2c"/><rect x="4" y="13" width="4" height="3" fill="none" stroke="#c07a2c" stroke-width="1.2"/></svg>
<svg style="left:316px;top:1032px;" width="24" height="25" viewBox="0 0 24 25"><circle cx="9" cy="4" r="3" fill="#9d8cf0"/><circle cx="19" cy="6" r="2.5" fill="#9d8cf0"/><path d="M14 10h10v9a5 5 0 0 1-10 0z" fill="#6264d8"/><path d="M4 9h13v10a6.5 6.5 0 0 1-13 0z" fill="#7b83eb"/><rect x="0" y="10" width="11" height="11" rx="1.5" fill="#4b53bc"/><path d="M3 13h5M5.5 13v6" stroke="#fff" stroke-width="1.6"/></svg>
<div style="left:340px;top:1025px;width:6px;height:6px;background:#0a6fd6;border-radius:50%"></div>
<svg style="left:365px;top:1032px;" width="24" height="24" viewBox="0 0 24 24"><defs><linearGradient id="wbx" x1="0" y1="0" x2="1" y2="0"><stop offset="0" stop-color="#1e6ef0"/><stop offset="0.55" stop-color="#1aa0e8"/><stop offset="1" stop-color="#3fd07a"/></linearGradient></defs><rect x="0" y="0" width="24" height="24" rx="5" fill="#111"/><path d="M3.5 9.5c0-3 1.5-4.5 3.5-4.5 2.5 0 3.5 3 5 7s2.5 7 5 7c2 0 3.5-1.5 3.5-4.5" fill="none" stroke="url(#wbx)" stroke-width="3.6" stroke-linecap="round"/><path d="M20.5 9.5c0-3-1.5-4.5-3.5-4.5-2.5 0-3.5 3-5 7s-2.5 7-5 7c-2 0-3.5-1.5-3.5-4.5V9.5" fill="none" stroke="#1d7ae8" stroke-width="3.6" stroke-linecap="round" opacity="0.9"/></svg>
<svg style="left:412px;top:1032px;" width="25" height="25" viewBox="0 0 25 25"><circle cx="12.5" cy="12.5" r="9" fill="none" stroke="#6f7883" stroke-width="5" stroke-dasharray="4 2.2"/><circle cx="12.5" cy="12.5" r="7.5" fill="#7a838d"/><circle cx="12.5" cy="12.5" r="5.5" fill="#e8ecf2"/><circle cx="12.5" cy="12.5" r="3.8" fill="#1b5fb8"/></svg>
<svg style="left:463px;top:1032px;" width="20" height="25" viewBox="0 0 20 25"><rect x="0" y="2" width="19" height="21" fill="#5cc7e8"/><rect x="0" y="21" width="19" height="2.5" fill="#b5651d"/><path d="M3 9h13M3 13h13M3 17h13" stroke="#1a6a9a" stroke-width="1.6"/><path d="M3 0v4M7 0v4M11 0v4M15 0v4" stroke="#1a6a9a" stroke-width="1.4"/></svg>
<svg style="left:508px;top:1032px;" width="26" height="24" viewBox="0 0 26 24"><rect x="7" y="1" width="18" height="21" rx="1" fill="#0f78d4"/><rect x="14" y="1" width="11" height="10" fill="#28a8ea"/><path d="M7 12l9 6 9-6v10H7z" fill="#1490df"/><rect x="0" y="5" width="13" height="13" rx="1.5" fill="#0a5fb4"/><circle cx="6.5" cy="11.5" r="3.3" fill="none" stroke="#fff" stroke-width="1.8"/></svg>
<div style="left:531px;top:1026px;width:6px;height:6px;background:#0a6fd6;border-radius:50%"></div>
<svg style="left:557px;top:1032px;" width="25" height="25" viewBox="0 0 25 25"><circle cx="12.5" cy="12.5" r="12" fill="#db4437"/><path d="M12.5 12.5L2.1 18.5A12 12 0 0 0 19 22.5z" fill="#0f9d58"/><path d="M12.5 12.5L23 6.5 24.5 12.5A12 12 0 0 1 19 22.5z" fill="#f4b400"/><path d="M12.5 7h10.4L19 22.5 12.5 12.5z" fill="#f4b400"/><circle cx="12.5" cy="12.5" r="5.3" fill="#fff"/><circle cx="12.5" cy="12.5" r="4.2" fill="#4285f4"/></svg>
<div style="left:579px;top:1026px;width:6px;height:6px;background:#0a6fd6;border-radius:50%"></div>
<svg style="left:605px;top:1032px;" width="23" height="24" viewBox="0 0 23 24"><path d="M0 2h15l5 4v18H0z" fill="#f0f0e8" stroke="#9a9a9a" stroke-width="0.8"/><rect x="1" y="12" width="18" height="11" fill="#8cc63f"/><path d="M5 6v10M8 9h4" stroke="#2a2a2a" stroke-width="1.5"/><path d="M21 2l-8 13" stroke="#e0a020" stroke-width="2.5"/></svg>
<svg style="left:651px;top:1031px;" width="27" height="26" viewBox="0 0 27 26"><path d="M19 1l7 3.5v17L19 25 7 14l-5 4-2-1.5V9.5L2 8l5 4z" fill="#1f9cf0"/><path d="M19 1v24L7 13z" fill="#0065a9" opacity="0.55"/><path d="M19 6.5v13l-6-6.5z" fill="#e8b4b0"/></svg>
<div style="left:674px;top:1026px;width:6px;height:6px;background:#0a6fd6;border-radius:50%"></div>
<svg style="left:0;top:0" width="1920" height="1080" viewBox="0 0 1920 1080"><defs><clipPath id="xtc"><rect x="703.5" y="1032.8" width="18.7" height="22.5" rx="3"/></clipPath></defs>
<g clip-path="url(#xtc)"><rect x="703.5" y="1032.8" width="19" height="23" fill="#1f6b26"/><rect x="703.5" y="1032.8" width="8.7" height="8.3" fill="#6fd660"/><rect x="712.2" y="1032.8" width="10" height="8.3" fill="#bdeb75"/></g>
<rect x="700.6" y="1039.5" width="12.5" height="13" rx="2.8" fill="#0e5a36"/>
<path d="M703.7 1042.5h2.2l1.2 2.2 1.2-2.2h2.2l-2.2 3.6 2.3 3.6h-2.2l-1.3-2.3-1.3 2.3h-2.2l2.3-3.6z" fill="#fff"/></svg>
<svg style="left:750px;top:1031px;" width="22" height="26" viewBox="0 0 22 26"><defs><linearGradient id="az" x1="0" y1="0" x2="0" y2="1"><stop offset="0" stop-color="#5aa8ff"/><stop offset="1" stop-color="#1560d0"/></linearGradient></defs><ellipse cx="11" cy="5" rx="10" ry="4.5" fill="url(#az)"/><ellipse cx="11" cy="21" rx="10" ry="4.5" fill="url(#az)"/><path d="M1 5c0 5 20 11 20 16M21 5C21 10 1 16 1 21" stroke="#2a7ae8" stroke-width="4.5" fill="none"/><path d="M1 5c0 5 20 11 20 16" stroke="#bcd6ff" stroke-width="1.5" fill="none"/></svg>
<svg style="left:796px;top:1031px;" width="26" height="26" viewBox="0 0 26 26"><circle cx="12.5" cy="13.5" r="12" fill="#db4437"/><path d="M12.5 13.5L2.1 19.5A12 12 0 0 0 19 23.5z" fill="#0f9d58"/><path d="M12.5 8h10.4L19 23.5 12.5 13.5z" fill="#f4b400"/><circle cx="12.5" cy="13.5" r="5.3" fill="#fff"/><circle cx="12.5" cy="13.5" r="4.2" fill="#4285f4"/><circle cx="18.5" cy="7" r="6" fill="#1a7f64" stroke="#e3e8f0" stroke-width="1"/></svg>
<div style="left:818px;top:1026px;width:6px;height:6px;background:#0a6fd6;border-radius:50%"></div>
<svg style="left:845px;top:1032px;" width="25" height="25" viewBox="0 0 25 25"><path d="M0 3h8l-3 20L0 20z" fill="#f97a12"/><path d="M8 0h16v16l-5 7H5z" fill="#087cfa"/><path d="M0 18l5 5 12-2-10-8z" fill="#fe315d"/><rect x="4" y="4" width="16" height="16" fill="#000"/><path d="M7 7.5h4M9 7.5v6M13 7.5v5a1.5 1.5 0 0 1-3 0M7 17h6" stroke="#fff" stroke-width="1.3" fill="none"/></svg>
<svg style="left:893px;top:1032px;" width="22" height="24" viewBox="0 0 22 24"><defs><linearGradient id="wd" x1="0" y1="0" x2="1" y2="1"><stop offset="0" stop-color="#41d0f5"/><stop offset="0.5" stop-color="#2b7cd3"/><stop offset="1" stop-color="#1d4fc0"/></linearGradient></defs><rect x="4" y="1" width="18" height="23" rx="2" fill="url(#wd)"/><rect x="0" y="13" width="11" height="11" rx="1.5" fill="#1646b8"/><path d="M2 15.5l1.8 6 1.7-5 1.7 5 1.8-6" stroke="#fff" stroke-width="1.3" fill="none"/></svg>
<svg style="left:941px;top:1032px;" width="24" height="25" viewBox="0 0 24 25"><circle cx="12" cy="12.5" r="12" fill="#8a3fc4"/><circle cx="12" cy="12.5" r="9.3" fill="#e3e8f0"/><path d="M7 19c-1-1-2-3-2-5.5 0-2 .7-3 1.5-3.8-.2-.7-.2-2 .2-3 1.2 0 2.3.8 3 1.3a9 9 0 0 1 4.6 0c.7-.5 1.8-1.3 3-1.3.4 1 .4 2.3.2 3 .8.8 1.5 1.8 1.5 3.8 0 2.5-1 4.5-2 5.5v2.3H13v-2.5h-2v2.5H7z" fill="#8a3fc4"/></svg>
<svg style="left:1521px;top:1027px;" width="42" height="38" viewBox="0 0 42 38"><defs><linearGradient id="sun" x1="0" y1="0" x2="1" y2="1"><stop offset="0" stop-color="#ffb629"/><stop offset="1" stop-color="#f47b20"/></linearGradient><linearGradient id="cl" x1="0" y1="0" x2="0" y2="1"><stop offset="0" stop-color="#f4f8fd"/><stop offset="1" stop-color="#a9c8ef"/></linearGradient></defs><circle cx="18" cy="17" r="15.5" fill="url(#sun)"/><path d="M6 35a6 6 0 0 1 1-11.5 8.5 8.5 0 0 1 16-2 6.5 6.5 0 0 1 10 6 4.5 4.5 0 0 1-1 7.5z" fill="url(#cl)"/></svg>
<div style="left:1538px;top:1018px;width:24px;height:24px;background:#c42b1c;border-radius:50%"></div>
<span class="t" style="left:1545px;top:1019px;font-size:17px;line-height:22px;color:#fff">1</span>
<svg style="left:1603px;top:1037px;" width="20" height="12" viewBox="0 0 20 12"><path d="M1.5 10L10 1.8l8.5 8.2" fill="none" stroke="#1a1a1a" stroke-width="1.8"/></svg>
<svg style="left:1648px;top:1034px;" width="26" height="18" viewBox="0 0 26 18"><defs><linearGradient id="od" x1="0" y1="0" x2="1" y2="1"><stop offset="0" stop-color="#2a7de0"/><stop offset="1" stop-color="#27c4f5"/></linearGradient></defs><path d="M5 17a5 5 0 0 1-.5-10A8 8 0 0 1 19 5a6 6 0 0 1 2 12z" fill="url(#od)"/></svg>
<svg style="left:1696px;top:1034px;" width="26" height="19" viewBox="0 0 26 19"><path d="M1.5 7a16 16 0 0 1 23 0M5 10.8a11 11 0 0 1 16 0M8.6 14.4a6 6 0 0 1 8.8 0" fill="none" stroke="#1a1a1a" stroke-width="1.8"/><circle cx="13" cy="17" r="1.9" fill="#1a1a1a"/></svg>
<svg style="left:1732px;top:1034px;" width="27" height="19" viewBox="0 0 27 19"><path d="M1.5 6.5h4.5L12 1.5v16l-6-5H1.5z" fill="none" stroke="#1a1a1a" stroke-width="1.6" stroke-linejoin="round"/><path d="M15.5 6.5a4 4 0 0 1 0 6M18.5 4a8 8 0 0 1 0 11" fill="none" stroke="#1a1a1a" stroke-width="1.6"/><path d="M21.5 1.5a12 12 0 0 1 0 16" fill="none" stroke="#9a9a9a" stroke-width="1.4"/></svg>
<svg style="left:1768px;top:1036px;" width="26" height="16" viewBox="0 0 26 16"><rect x="1" y="1" width="20" height="14" rx="3" fill="none" stroke="#1a1a1a" stroke-width="1.8"/><rect x="3.5" y="3.5" width="15" height="9" rx="1" fill="#1a1a1a"/><rect x="22" y="5" width="3" height="6" rx="1" fill="#1a1a1a"/></svg>
<span class="t" style="left:1826.82px;top:1024.00px;font-size:17.68px;line-height:17.68px;color:#1a1a1a;">2:47 PM</span>
<span class="t" style="left:1818.62px;top:1047.00px;font-size:18.41px;line-height:18.41px;color:#1a1a1a;transform:scaleX(1.0242);">4/2/2026</span>
</body></html>
